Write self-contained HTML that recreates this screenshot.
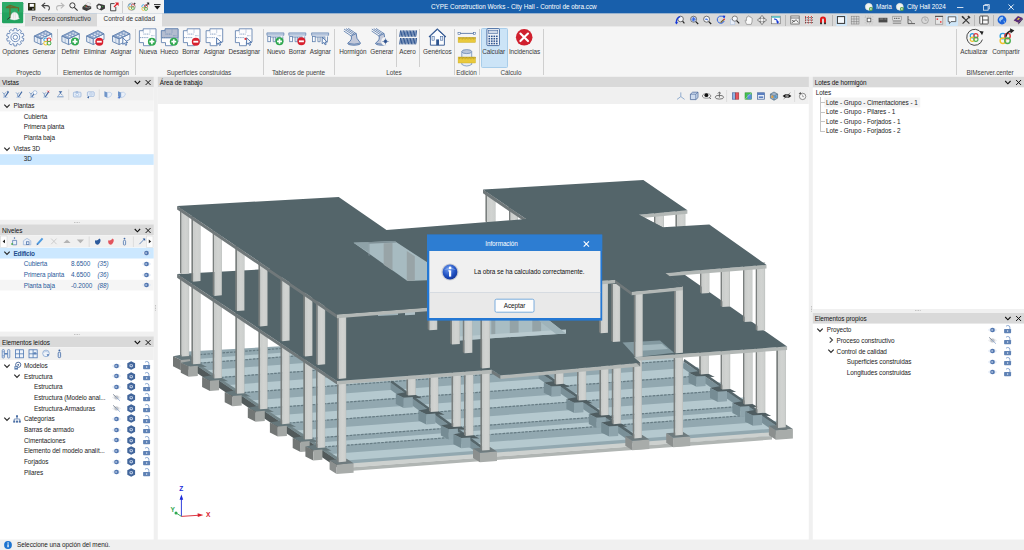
<!DOCTYPE html>
<html><head><meta charset="utf-8"><title>CYPE Construction Works - City Hall - Control de obra.ccw</title>
<style>
html,body{margin:0;padding:0;background:#f0f0f0;}
body{width:1024px;height:550px;overflow:hidden;}
#app{position:relative;width:1024px;height:550px;overflow:hidden;background:#f0f0f0;font-family:"Liberation Sans",sans-serif;font-size:6.4px;color:#222;line-height:8px;letter-spacing:-0.07px;}
#app *{box-sizing:border-box;}
.a{position:absolute;white-space:nowrap;}
.t{position:absolute;white-space:nowrap;height:8px;line-height:8px;}
.c{text-align:center;}
.hdr{position:absolute;background:#d9d9d9;height:10.7px;}
.hdr .t{top:2.0px;color:#111;}
.sep{position:absolute;width:1px;background:#cfcfcf;}
svg{position:absolute;overflow:visible;}
</style></head><body>
<div id="app">
<svg style="left:0px;top:0px" width="1024" height="14" viewBox="0 0 1024 14"><rect x="0.00" y="0.00" width="1024.00" height="13.60" fill="#185fab"/></svg>
<svg style="left:0px;top:0px" width="164" height="14" viewBox="0 0 164 14"><rect x="0.00" y="0.00" width="164.00" height="13.60" fill="#f3f3f3"/></svg>
<svg style="left:0px;top:13px" width="1024" height="14" viewBox="0 0 1024 14"><rect x="0.00" y="0.60" width="1024.00" height="13.00" fill="#d9d9d9"/></svg>
<svg style="left:0px;top:13px" width="25" height="14" viewBox="0 0 25 14"><rect x="0.00" y="0.60" width="25.00" height="13.00" fill="#f3f3f3"/></svg>
<svg style="left:1.60px;top:2.20px" width="21.2" height="21.2" viewBox="0 0 21.2 21.2"><rect x="0" y="0" width="21.2" height="21.2" rx="1.2" fill="#22a35f"/><rect x="0" y="0" width="21.2" height="10.5" rx="1.2" fill="#2cab69"/><path d="M8 3.2 V16 M3.8 5.6 H16.5 M16.5 5.6 V9.5 M8 3.4 L4 5.6 M8 3.4 L15 5.6" stroke="#6a6a2c" stroke-width="1.2" fill="none"/><path d="M5.2 17.5 L8 15.2" stroke="#333" stroke-width="1"/><path d="M8.8 16 Q8.6 10.4 12.6 10.2 Q16.4 10.4 16.6 15.4 L17.4 16.6 Q12.5 19.4 8 17Z" fill="#f4f4f4" stroke="#d8d8d8" stroke-width="0.4"/><path d="M11.4 11 V16.5 M13.3 11 V16.5" stroke="#cfcfcf" stroke-width="0.5"/></svg>
<svg style="left:27.80px;top:3.10px" width="7.4" height="7.6" viewBox="0 0 7.4 7.6"><rect x="0" y="0" width="7.4" height="7.6" rx="0.5" fill="#1a1a10"/><rect x="1.5" y="0.8" width="4.4" height="3" fill="#fff"/><rect x="0.6" y="0.6" width="0.8" height="6" fill="#55551e"/><rect x="6" y="0.6" width="0.8" height="6" fill="#55551e"/><rect x="4.2" y="5.5" width="1.6" height="1.2" fill="#ddd"/></svg>
<svg style="left:41.00px;top:1.60px" width="10" height="9" viewBox="0 0 10 9"><path d="M4.2 0.8 L1 3.6 L4.2 6.4 M1.2 3.6 H6 Q8.6 3.8 8.4 6.4 Q8.2 7.6 7.4 8.4" stroke="#444" stroke-width="1.1" fill="none"/></svg>
<svg style="left:54.50px;top:1.60px" width="10" height="9" viewBox="0 0 10 9"><path d="M5.8 0.8 L9 3.6 L5.8 6.4 M8.8 3.6 H4 Q1.4 3.8 1.6 6.4 Q1.8 7.6 2.6 8.4" stroke="#b9b9b9" stroke-width="1.1" fill="none"/></svg>
<svg style="left:68.50px;top:2.30px" width="9.5" height="9.5" viewBox="0 0 9.5 9.5"><circle cx="3.4" cy="3.4" r="2.6" fill="none" stroke="#3a3a3a" stroke-width="1"/><path d="M5.3 5.3 L8.6 8.6" stroke="#3a3a3a" stroke-width="1.2"/></svg>
<svg style="left:82.00px;top:2.00px" width="9.6" height="9.4" viewBox="0 0 9.6 9.4"><path d="M0.4 5 L3.2 2.6 L9.2 4.4 L9.2 6.8 L4.6 9 L0.4 7.2Z" fill="#3d3d3d"/><path d="M3.6 2.4 L5.8 0.4 L8.6 1.4 L7.4 4.2Z" fill="#f2f2f2" stroke="#888" stroke-width="0.3"/><path d="M2.2 4.6 L6.4 6 L8.6 4.8" stroke="#bbb" stroke-width="0.5" fill="none"/><circle cx="4.2" cy="4.2" r="0.6" fill="#e33"/><circle cx="3" cy="3.9" r="0.5" fill="#3c3"/></svg>
<svg style="left:96.00px;top:3.00px" width="9.4" height="8" viewBox="0 0 9.4 8"><path d="M0.3 2.6 L2.6 0.6 L8.9 2.2 L9 5.6 L5.4 7.6 L0.8 5.6Z" fill="#3d3d3d"/><path d="M1.6 3 Q3.4 1.6 5 3.2 Q5.4 5.6 3.2 6.2 Q1.4 5.4 1.6 3Z" fill="#f6f6f6"/><circle cx="6.6" cy="3.6" r="0.5" fill="#3c3"/></svg>
<svg style="left:109.60px;top:2.00px" width="9" height="9.4" viewBox="0 0 9 9.4"><path d="M4.6 1.6 H0.6 V8.8 H5.8 V5" stroke="#3a3a3a" stroke-width="0.9" fill="#f4f4f4"/><path d="M4 5 L7.6 1.4" stroke="#e0202a" stroke-width="1.3"/><path d="M5 0.4 H8.6 V4Z" fill="#e0202a"/></svg>
<div class="sep" style="left:122.2px;top:1px;height:11.5px;background:#d0d0d0;"></div>
<svg style="left:127.00px;top:2.30px" width="10" height="9.4" viewBox="0 0 10 9.4"><circle cx="4.6" cy="4.7" r="3.7" fill="#fafafa" stroke="#777" stroke-width="0.6"/><circle cx="3.3819999999999997" cy="3.582" r="1.45" fill="none" stroke="#2d9fe0" stroke-width="0.754"/><circle cx="5.818" cy="3.582" r="1.45" fill="none" stroke="#e23b3b" stroke-width="0.754"/><circle cx="3.3819999999999997" cy="6.018" r="1.45" fill="none" stroke="#f0c22a" stroke-width="0.754"/><circle cx="5.818" cy="6.018" r="1.45" fill="none" stroke="#4cae4f" stroke-width="0.754"/><path d="M7 0.6 L8.8 1.6 L7.2 2.8Z" fill="#333"/></svg>
<svg style="left:139.50px;top:2.00px" width="10" height="10" viewBox="0 0 10 10"><circle cx="3.398" cy="4.298" r="1.55" fill="none" stroke="#2d9fe0" stroke-width="0.806"/><circle cx="6.002000000000001" cy="4.298" r="1.55" fill="none" stroke="#e23b3b" stroke-width="0.806"/><circle cx="3.398" cy="6.901999999999999" r="1.55" fill="none" stroke="#f0c22a" stroke-width="0.806"/><circle cx="6.002000000000001" cy="6.901999999999999" r="1.55" fill="none" stroke="#4cae4f" stroke-width="0.806"/><path d="M5.4 4.2 L8 1.6" stroke="#222" stroke-width="1"/><path d="M6.6 0.6 H9.2 V3.2Z" fill="#222"/></svg>
<svg style="left:154.30px;top:3.80px" width="7" height="6" viewBox="0 0 7 6"><rect x="0" y="0.2" width="6.6" height="0.9" fill="#111"/><path d="M0.3 2 H6.3 L3.3 5.4Z" fill="#111"/></svg>
<svg style="left:97px;top:13px" width="65" height="14" viewBox="0 0 65 14"><rect x="0.00" y="0.60" width="65.00" height="13.20" fill="#f5f5f5"/></svg>
<div class="t" style="left:31.6px;top:15px;color:#333;letter-spacing:-0.01px;">Proceso constructivo</div>
<div class="t" style="left:103.6px;top:15px;color:#333;letter-spacing:-0.01px;">Control de calidad</div>
<div class="t" style="left:431.0px;top:3px;color:#fff;letter-spacing:-0.02px;">CYPE Construction Works - City Hall - Control de obra.ccw</div>
<div class="t" style="left:876.0px;top:3px;color:#fff;">Maria</div>
<div class="t" style="left:907.0px;top:3px;color:#fff;">City Hall 2024</div>
<svg style="left:865.00px;top:3.00px" width="8.5" height="8.5" viewBox="0 0 8.5 8.5"><circle cx="3.8" cy="3.8" r="3.5" fill="#f2f5f2" stroke="#cfd6cf" stroke-width="0.4"/><path d="M3.8 0.4 L6.8 2.2 L6.8 5.4 L3.8 7.2 L0.8 5.4 L0.8 2.2Z" fill="none" stroke="#e4e8e4" stroke-width="0.4"/><circle cx="5.9" cy="5.9" r="2" fill="#58a646"/><circle cx="5.9" cy="5.9" r="0.9" fill="#d8e9c9"/></svg>
<svg style="left:895.80px;top:3.20px" width="8.5" height="8.5" viewBox="0 0 8.5 8.5"><circle cx="3.8" cy="3.8" r="3.5" fill="#f2f5f2" stroke="#cfd6cf" stroke-width="0.4"/><path d="M3.8 0.4 L6.8 2.2 L6.8 5.4 L3.8 7.2 L0.8 5.4 L0.8 2.2Z" fill="none" stroke="#e4e8e4" stroke-width="0.4"/><circle cx="5.9" cy="5.9" r="2" fill="#58a646"/><circle cx="5.9" cy="5.9" r="0.9" fill="#d8e9c9"/></svg>
<svg style="left:956.80px;top:6.60px" width="6.4" height="1" viewBox="0 0 6.4 1"><rect x="0" y="0" width="6.4" height="0.9" fill="#e8eef7"/></svg>
<svg style="left:982.50px;top:4.00px" width="7" height="7" viewBox="0 0 7 7"><rect x="0.5" y="1.6" width="4.6" height="4.6" fill="none" stroke="#e8eef7" stroke-width="0.8"/><path d="M1.8 1.4 V0.5 H6.3 V5 H5.3" fill="none" stroke="#e8eef7" stroke-width="0.8"/></svg>
<svg style="left:1008.00px;top:4.00px" width="6.4" height="6.4" viewBox="0 0 6.4 6.4"><path d="M0.5 0.5 L5.7 5.7 M5.7 0.5 L0.5 5.7" stroke="#fff" stroke-width="0.9" fill="none"/></svg>
<svg style="left:674.50px;top:14.90px" width="10" height="10" viewBox="0 0 10 10"><circle cx="5.6" cy="4" r="2.8" fill="#f4f6fa" stroke="#555" stroke-width="0.8"/><path d="M7.6 6.2 L9.4 8.4" stroke="#222" stroke-width="1.1"/><path d="M1.4 8.6 Q0.8 3 5.2 1.6" stroke="#1638d8" stroke-width="1.4" fill="none"/><path d="M0.2 7 L1.6 9.6 L3 7Z" fill="#1638d8"/></svg>
<svg style="left:688.50px;top:14.90px" width="10" height="10" viewBox="0 0 10 10"><circle cx="4.6" cy="4.2" r="3" fill="#f4f6fa" stroke="#555" stroke-width="0.8"/><path d="M6.8 6.6 L9.2 9" stroke="#222" stroke-width="1.2"/><path d="M4.6 1.8 V6.6 M2.2 4.2 H7 M2.9 2.5 L6.3 5.9 M6.3 2.5 L2.9 5.9" stroke="#2f62e0" stroke-width="0.9"/></svg>
<svg style="left:702.20px;top:14.90px" width="10" height="10" viewBox="0 0 10 10"><circle cx="4.6" cy="4.2" r="3" fill="#f4f6fa" stroke="#555" stroke-width="0.8"/><path d="M6.8 6.6 L9.2 9" stroke="#222" stroke-width="1.2"/><path d="M3 4.4 H6 M4 3.2 L5.4 5.4" stroke="#2f62e0" stroke-width="0.7"/></svg>
<svg style="left:715.80px;top:14.90px" width="10" height="10" viewBox="0 0 10 10"><path d="M7.8 2.6 A3.6 3.6 0 1 0 8.2 6" stroke="#2f62e0" stroke-width="1" fill="none"/><path d="M6.4 0.4 L9.4 0.8 L8.4 3.6Z" fill="#1638d8"/><path d="M4.6 7.6 L8 4.4" stroke="#6a5a28" stroke-width="1.3"/><circle cx="8.2" cy="4.4" r="0.8" fill="#e33"/></svg>
<svg style="left:729.50px;top:14.90px" width="10" height="10" viewBox="0 0 10 10"><rect x="0.4" y="4.6" width="4.4" height="5" fill="#e8eef8" stroke="#a9bddb" stroke-width="0.5"/><circle cx="4.8" cy="3.6" r="2.6" fill="#f4f6fa" stroke="#666" stroke-width="0.8"/><path d="M6.6 5.6 L9.2 8.4" stroke="#222" stroke-width="1.2"/></svg>
<svg style="left:743.70px;top:14.90px" width="10" height="10" viewBox="0 0 10 10"><path d="M2.6 9.4 L1 5.6 Q1.4 4.8 2.4 5.8 L2.6 2.2 Q3.2 1.4 3.8 2.2 L4 1.2 Q4.7 0.5 5.3 1.2 L5.5 1.8 Q6.2 1.2 6.8 2 L7 3 Q7.8 2.6 8.2 3.4 L8 7 L7.2 9.4Z" fill="#fafafa" stroke="#777" stroke-width="0.6"/></svg>
<svg style="left:757.40px;top:14.90px" width="10" height="10" viewBox="0 0 10 10"><path d="M5 0.4 L6.8 2.6 H6 V4 H7.4 V3.2 L9.6 5 L7.4 6.8 V6 H6 V7.4 H6.8 L5 9.6 L3.2 7.4 H4 V6 H2.6 V6.8 L0.4 5 L2.6 3.2 V4 H4 V2.6 H3.2Z" fill="#f4f4f4" stroke="#555" stroke-width="0.7"/></svg>
<svg style="left:771.40px;top:14.90px" width="10" height="10" viewBox="0 0 10 10"><rect x="0.6" y="1.2" width="8.6" height="7.6" fill="#f8f8f8" stroke="#666" stroke-width="0.6"/><rect x="0.6" y="1.2" width="8.6" height="1.6" fill="#55bfc8"/><path d="M3 4 Q6.4 4 6.6 7.4" stroke="#1638d8" stroke-width="1.2" fill="none"/><path d="M5 6.6 L6.8 9 L8.2 6.4Z" fill="#1638d8"/></svg>
<div class="sep" style="left:785px;top:15px;height:10.5px;background:#b8b8b8;"></div>
<svg style="left:790.00px;top:14.90px" width="10" height="10" viewBox="0 0 10 10"><rect x="0.8" y="1" width="8.4" height="8" fill="#f4f4f4" stroke="#555" stroke-width="0.7"/><path d="M1 3 H9 M2 5 L4 7 L6 4.6 L8.4 7.6 M2 8 L4.4 5" stroke="#444" stroke-width="0.7" fill="none"/></svg>
<svg style="left:803.50px;top:14.90px" width="10" height="10" viewBox="0 0 10 10"><rect x="1" y="0.8" width="8" height="8.4" fill="#e8e8e8"/><path d="M1.6 1 V9 M4.4 1 V9 M7.4 1 V9" stroke="#d33" stroke-width="1" stroke-dasharray="1.2 0.9"/><path d="M1 2.6 H9 M1 5 H9 M1 7.6 H9" stroke="#333" stroke-width="0.8" stroke-dasharray="1.4 0.8"/></svg>
<svg style="left:817.50px;top:14.90px" width="10" height="10" viewBox="0 0 10 10"><path d="M2 9 V4.6 Q2 1.4 5 1.4 Q8 1.4 8 4.6 V9 H6 V4.8 Q6 3.4 5 3.4 Q4 3.4 4 4.8 V9Z" fill="#e01818"/><rect x="2" y="7.6" width="2" height="1.6" fill="#333"/><rect x="6" y="7.6" width="2" height="1.6" fill="#333"/></svg>
<div class="sep" style="left:832px;top:15px;height:10.5px;background:#b8b8b8;"></div>
<div class="a" style="left:835.5px;top:14.6px;width:11.6px;height:11px;background:#cfe6f8;border-radius:1px;"></div>
<svg style="left:836.30px;top:14.90px" width="10" height="10" viewBox="0 0 10 10"><rect x="1.4" y="1.6" width="7.2" height="6.8" fill="#f4f8fc" stroke="#333" stroke-width="1"/></svg>
<svg style="left:849.80px;top:14.90px" width="10" height="10" viewBox="0 0 10 10"><path d="M1 1.4 H9 M1 4 H9 M1 6.6 H9 M1 9 H9 M1.4 1 V9.2 M4 1 V9.2 M6.6 1 V9.2 M9 1 V9.2" stroke="#777" stroke-width="0.5"/></svg>
<svg style="left:863.80px;top:14.90px" width="10" height="10" viewBox="0 0 10 10"><rect x="3.2" y="3.2" width="3.6" height="3.6" fill="#fff" stroke="#555" stroke-width="0.8"/><path d="M1.2 1.2 H8.8 V8.8 H1.2Z" fill="none" stroke="#aaa" stroke-width="0.6" stroke-dasharray="0.8 1.8"/></svg>
<svg style="left:878.00px;top:14.90px" width="10" height="10" viewBox="0 0 10 10"><rect x="0.6" y="2.8" width="8.8" height="4.6" fill="#4a4a4a"/><path d="M1.6 4 H5.4 M6.4 4 H8.4" stroke="#bbb" stroke-width="0.6"/></svg>
<svg style="left:892.30px;top:14.90px" width="10" height="10" viewBox="0 0 10 10"><rect x="0.8" y="1.2" width="8.4" height="4.2" fill="#e0e0e0" stroke="#777" stroke-width="0.5"/><path d="M2 3.3 H8" stroke="#555" stroke-width="1" stroke-dasharray="1.2 0.6"/><path d="M0.8 6.8 H9.2 M0.8 8.4 H9.2" stroke="#777" stroke-width="0.7"/></svg>
<svg style="left:905.80px;top:14.90px" width="10" height="10" viewBox="0 0 10 10"><path d="M2 1 V8.6 H9" stroke="#555" stroke-width="0.9" fill="none"/><path d="M2 4.4 Q5.6 4.8 6.2 8.6" stroke="#555" stroke-width="0.6" fill="none"/></svg>
<svg style="left:919.80px;top:14.90px" width="10" height="10" viewBox="0 0 10 10"><circle cx="5" cy="5.2" r="3.4" fill="none" stroke="#888" stroke-width="0.6"/><path d="M5 5.2 V2.6 M5 5.2 H7" stroke="#888" stroke-width="0.5"/></svg>
<svg style="left:933.50px;top:14.90px" width="10" height="10" viewBox="0 0 10 10"><rect x="1.4" y="1.6" width="7.4" height="7.6" fill="#e6e6e6" stroke="#888" stroke-width="0.6"/><rect x="1" y="0.8" width="8" height="1.2" fill="#555"/><rect x="2.6" y="3.4" width="1.5" height="1.5" fill="#e33"/><rect x="6" y="6.2" width="1.5" height="1.5" fill="#e33"/></svg>
<div class="a" style="left:946.4px;top:14.6px;width:11.6px;height:11px;background:#cfe6f8;border-radius:1px;"></div>
<svg style="left:947.30px;top:14.90px" width="10" height="10" viewBox="0 0 10 10"><path d="M1.2 1.8 H8.8 V6.6 H4 L2.4 8.6 V6.6 H1.2Z" fill="#f4f8fc" stroke="#444" stroke-width="0.8"/></svg>
<svg style="left:961.30px;top:14.90px" width="10" height="10" viewBox="0 0 10 10"><path d="M1.6 1.8 L8.4 8.6 M8.4 1.8 L1.6 8.6" stroke="#333" stroke-width="1.1"/><path d="M1 1.2 L3 3.2 M7 1 L9 3" stroke="#333" stroke-width="1.6"/></svg>
<div class="sep" style="left:974px;top:15px;height:10.5px;background:#b8b8b8;"></div>
<svg style="left:978.50px;top:14.90px" width="10" height="10" viewBox="0 0 10 10"><rect x="0.8" y="1" width="8.4" height="8" rx="0.6" fill="#fafafa" stroke="#444" stroke-width="0.9"/><path d="M3.6 1 V9 M3.6 5 H9.2" stroke="#444" stroke-width="0.9"/></svg>
<div class="sep" style="left:992.6px;top:15px;height:10.5px;background:#b8b8b8;"></div>
<svg style="left:997.30px;top:14.90px" width="10" height="10" viewBox="0 0 10 10"><circle cx="5" cy="5" r="4.4" fill="#1d63d8"/><path d="M2 4 Q3.4 1.4 5.8 1.8 Q7 3.4 5.4 4.6 Q3.6 5 3.4 7 Q2 6 2 4Z" fill="#9cc8f4"/><path d="M6.4 5.6 Q8.4 5.4 8 7.4 Q6.8 8.4 6.4 5.6Z" fill="#7fb4ee"/></svg>
<svg style="left:1013.00px;top:14.90px" width="10" height="10" viewBox="0 0 10 10"><path d="M0.6 5.6 L5 1 L9.6 3 L5.4 8Z" fill="#5a2c78"/><path d="M0.6 5.6 L5.4 8 L5.4 9.4 L0.6 7Z" fill="#d8d0c0"/><path d="M5.4 8 L9.6 3 V4.4 L5.4 9.4Z" fill="#3a1c50"/><path d="M3.8 4.4 L5.6 2.8 L7 3.4 L5.2 5Z" fill="#e8c83a"/></svg>
<svg style="left:0px;top:26px" width="1024" height="51" viewBox="0 0 1024 51"><rect x="0.00" y="0.60" width="1024.00" height="50.20" fill="#f5f5f5"/></svg>
<div class="a" style="left:481px;top:27.5px;width:26.5px;height:40.5px;background:#cce4f7;border:0.5px solid #a8cdea;border-radius:1.5px;"></div>
<div class="sep" style="left:57.0px;top:29px;height:46px;"></div>
<div class="sep" style="left:134.5px;top:29px;height:46px;"></div>
<div class="sep" style="left:262.5px;top:29px;height:46px;"></div>
<div class="sep" style="left:333.5px;top:29px;height:46px;"></div>
<div class="sep" style="left:395.5px;top:29px;height:38px;"></div>
<div class="sep" style="left:419.0px;top:29px;height:38px;"></div>
<div class="sep" style="left:453.5px;top:29px;height:46px;"></div>
<div class="sep" style="left:478.5px;top:29px;height:46px;"></div>
<div class="sep" style="left:542.5px;top:29px;height:46px;"></div>
<div class="sep" style="left:956.0px;top:29px;height:46px;"></div>
<div class="t c" style="left:-44.5px;width:120px;top:48px;color:#3a3a3a;">Opciones</div>
<div class="t c" style="left:-16.0px;width:120px;top:48px;color:#3a3a3a;">Generar</div>
<div class="t c" style="left:10.5px;width:120px;top:48px;color:#3a3a3a;">Definir</div>
<div class="t c" style="left:35.0px;width:120px;top:48px;color:#3a3a3a;">Eliminar</div>
<div class="t c" style="left:61.0px;width:120px;top:48px;color:#3a3a3a;">Asignar</div>
<div class="t c" style="left:88.0px;width:120px;top:48px;color:#3a3a3a;">Nueva</div>
<div class="t c" style="left:109.3px;width:120px;top:48px;color:#3a3a3a;">Hueco</div>
<div class="t c" style="left:130.8px;width:120px;top:48px;color:#3a3a3a;">Borrar</div>
<div class="t c" style="left:154.3px;width:120px;top:48px;color:#3a3a3a;">Asignar</div>
<div class="t c" style="left:184.3px;width:120px;top:48px;color:#3a3a3a;">Desasignar</div>
<div class="t c" style="left:216.0px;width:120px;top:48px;color:#3a3a3a;">Nuevo</div>
<div class="t c" style="left:237.5px;width:120px;top:48px;color:#3a3a3a;">Borrar</div>
<div class="t c" style="left:260.3px;width:120px;top:48px;color:#3a3a3a;">Asignar</div>
<div class="t c" style="left:292.8px;width:120px;top:48px;color:#3a3a3a;">Hormigón</div>
<div class="t c" style="left:321.8px;width:120px;top:48px;color:#3a3a3a;">Generar</div>
<div class="t c" style="left:347.5px;width:120px;top:48px;color:#3a3a3a;">Acero</div>
<div class="t c" style="left:377.3px;width:120px;top:48px;color:#3a3a3a;">Genéricos</div>
<div class="t c" style="left:433.7px;width:120px;top:48px;color:#3a3a3a;">Calcular</div>
<div class="t c" style="left:464.5px;width:120px;top:48px;color:#3a3a3a;">Incidencias</div>
<div class="t c" style="left:914.0px;width:120px;top:48px;color:#3a3a3a;">Actualizar</div>
<div class="t c" style="left:946.0px;width:120px;top:48px;color:#3a3a3a;">Compartir</div>
<div class="t c" style="left:-31.5px;width:120px;top:69px;color:#444;">Proyecto</div>
<div class="t c" style="left:36.0px;width:120px;top:69px;color:#444;">Elementos de hormigón</div>
<div class="t c" style="left:139.0px;width:120px;top:69px;color:#444;">Superficies construidas</div>
<div class="t c" style="left:238.5px;width:120px;top:69px;color:#444;">Tableros de puente</div>
<div class="t c" style="left:334.0px;width:120px;top:69px;color:#444;">Lotes</div>
<div class="t c" style="left:406.5px;width:120px;top:69px;color:#444;">Edición</div>
<div class="t c" style="left:451.0px;width:120px;top:69px;color:#444;">Cálculo</div>
<div class="t c" style="left:930.0px;width:120px;top:69px;color:#444;">BIMserver.center</div>
<svg style="left:0;top:0" width="1024" height="80" viewBox="0 0 1024 80"><path d="M13.98 28.55 L16.62 28.55 L16.84 30.65 L17.93 31.00 L19.35 29.44 L21.48 30.98 L20.43 32.82 L21.10 33.74 L23.17 33.31 L23.98 35.81 L22.05 36.68 L22.05 37.82 L23.98 38.69 L23.17 41.19 L21.10 40.76 L20.43 41.68 L21.48 43.52 L19.35 45.06 L17.93 43.50 L16.84 43.85 L16.62 45.95 L13.98 45.95 L13.76 43.85 L12.67 43.50 L11.25 45.06 L9.12 43.52 L10.17 41.68 L9.50 40.76 L7.43 41.19 L6.62 38.69 L8.55 37.82 L8.55 36.68 L6.62 35.81 L7.43 33.31 L9.50 33.74 L10.17 32.82 L9.12 30.98 L11.25 29.44 L12.67 31.00 L13.76 30.65Z" fill="#f4f7fb" stroke="#6686b6" stroke-width="0.9" stroke-linejoin="round"/><circle cx="15.3" cy="37.25" r="4.4" fill="#fbfcfe" stroke="#6686b6" stroke-width="0.9"/><circle cx="15.3" cy="37.25" r="2.2" fill="#fff" stroke="#6686b6" stroke-width="0.9"/><path d="M34.30 36.00 L41.00 38.80 L41.00 44.60 L34.30 41.60Z" fill="#e3eaf4" stroke="#5f80ae" stroke-width="0.85" stroke-linejoin="round"/><path d="M41.00 38.80 L51.70 33.80 L51.70 39.40 L41.00 44.60Z" fill="#f6f8fb" stroke="#5f80ae" stroke-width="0.85" stroke-linejoin="round"/><path d="M34.30 36.00 L45.60 30.50 L51.70 33.80 L41.00 38.80Z" fill="#8ea6cb" stroke="#5f80ae" stroke-width="0.85" stroke-linejoin="round"/><ellipse cx="39.6" cy="35.6" rx="1.05" ry="0.6" fill="#eef2f8"/><ellipse cx="42.6" cy="34.2" rx="1.05" ry="0.6" fill="#eef2f8"/><ellipse cx="45.6" cy="32.8" rx="1.05" ry="0.6" fill="#eef2f8"/><ellipse cx="42" cy="36.7" rx="1.05" ry="0.6" fill="#eef2f8"/><ellipse cx="45" cy="35.3" rx="1.05" ry="0.6" fill="#eef2f8"/><ellipse cx="48" cy="33.9" rx="1.05" ry="0.6" fill="#eef2f8"/><path d="M37.6 37.6 V43" stroke="#5f80ae" stroke-width="0.5" opacity="0.8"/><rect x="43.4" y="37.4" width="8.6" height="8.2" fill="#fbfbfb"/><circle cx="45.762" cy="39.862" r="1.95" fill="none" stroke="#2d9fe0" stroke-width="1.014"/><circle cx="49.038" cy="39.862" r="1.95" fill="none" stroke="#e23b3b" stroke-width="1.014"/><circle cx="45.762" cy="43.138" r="1.95" fill="none" stroke="#f0c22a" stroke-width="1.014"/><circle cx="49.038" cy="43.138" r="1.95" fill="none" stroke="#4cae4f" stroke-width="1.014"/><path d="M61.90 36.00 L68.60 38.80 L68.60 44.60 L61.90 41.60Z" fill="#e3eaf4" stroke="#5f80ae" stroke-width="0.85" stroke-linejoin="round"/><path d="M68.60 38.80 L79.30 33.80 L79.30 39.40 L68.60 44.60Z" fill="#f6f8fb" stroke="#5f80ae" stroke-width="0.85" stroke-linejoin="round"/><path d="M61.90 36.00 L73.20 30.50 L79.30 33.80 L68.60 38.80Z" fill="#8ea6cb" stroke="#5f80ae" stroke-width="0.85" stroke-linejoin="round"/><ellipse cx="67.2" cy="35.6" rx="1.05" ry="0.6" fill="#eef2f8"/><ellipse cx="70.2" cy="34.2" rx="1.05" ry="0.6" fill="#eef2f8"/><ellipse cx="73.2" cy="32.8" rx="1.05" ry="0.6" fill="#eef2f8"/><ellipse cx="69.6" cy="36.7" rx="1.05" ry="0.6" fill="#eef2f8"/><ellipse cx="72.6" cy="35.3" rx="1.05" ry="0.6" fill="#eef2f8"/><ellipse cx="75.6" cy="33.9" rx="1.05" ry="0.6" fill="#eef2f8"/><path d="M65.2 37.6 V43" stroke="#5f80ae" stroke-width="0.5" opacity="0.8"/><circle cx="75" cy="41.6" r="4.0" fill="#2fa84f"/><path d="M72.52 41.6 H77.48 M75 39.120000000000005 V44.08" stroke="#fff" stroke-width="1.68"/><path d="M86.60 36.00 L93.30 38.80 L93.30 44.60 L86.60 41.60Z" fill="#e3eaf4" stroke="#5f80ae" stroke-width="0.85" stroke-linejoin="round"/><path d="M93.30 38.80 L104.00 33.80 L104.00 39.40 L93.30 44.60Z" fill="#f6f8fb" stroke="#5f80ae" stroke-width="0.85" stroke-linejoin="round"/><path d="M86.60 36.00 L97.90 30.50 L104.00 33.80 L93.30 38.80Z" fill="#8ea6cb" stroke="#5f80ae" stroke-width="0.85" stroke-linejoin="round"/><ellipse cx="91.89999999999999" cy="35.6" rx="1.05" ry="0.6" fill="#eef2f8"/><ellipse cx="94.89999999999999" cy="34.2" rx="1.05" ry="0.6" fill="#eef2f8"/><ellipse cx="97.89999999999999" cy="32.8" rx="1.05" ry="0.6" fill="#eef2f8"/><ellipse cx="94.3" cy="36.7" rx="1.05" ry="0.6" fill="#eef2f8"/><ellipse cx="97.3" cy="35.3" rx="1.05" ry="0.6" fill="#eef2f8"/><ellipse cx="100.3" cy="33.9" rx="1.05" ry="0.6" fill="#eef2f8"/><path d="M89.89999999999999 37.6 V43" stroke="#5f80ae" stroke-width="0.5" opacity="0.8"/><circle cx="99.3" cy="41.7" r="4.0" fill="#d8202e"/><path d="M96.82 41.7 H101.78" stroke="#fff" stroke-width="1.84"/><path d="M112.50 36.00 L119.20 38.80 L119.20 44.60 L112.50 41.60Z" fill="#e3eaf4" stroke="#5f80ae" stroke-width="0.85" stroke-linejoin="round"/><path d="M119.20 38.80 L129.90 33.80 L129.90 39.40 L119.20 44.60Z" fill="#f6f8fb" stroke="#5f80ae" stroke-width="0.85" stroke-linejoin="round"/><path d="M112.50 36.00 L123.80 30.50 L129.90 33.80 L119.20 38.80Z" fill="#8ea6cb" stroke="#5f80ae" stroke-width="0.85" stroke-linejoin="round"/><ellipse cx="117.8" cy="35.6" rx="1.05" ry="0.6" fill="#eef2f8"/><ellipse cx="120.8" cy="34.2" rx="1.05" ry="0.6" fill="#eef2f8"/><ellipse cx="123.8" cy="32.8" rx="1.05" ry="0.6" fill="#eef2f8"/><ellipse cx="120.2" cy="36.7" rx="1.05" ry="0.6" fill="#eef2f8"/><ellipse cx="123.2" cy="35.3" rx="1.05" ry="0.6" fill="#eef2f8"/><ellipse cx="126.2" cy="33.9" rx="1.05" ry="0.6" fill="#eef2f8"/><path d="M115.8 37.6 V43" stroke="#5f80ae" stroke-width="0.5" opacity="0.8"/><path d="M122.80 37.80 L122.80 44.40 L124.50 43.00 L125.70 45.40 L126.80 44.90 L125.70 42.60 L127.80 42.60Z" fill="#fafbfd" stroke="#4a6fa8" stroke-width="0.9" stroke-linejoin="round"/><path d="M143.2 28.799999999999997 H156 V42.0 H150.4 V45.7 H143.5 V42.599999999999994 H139.4 V30.7 H143.2Z" fill="#fdfdfe" stroke="#5f80ae" stroke-width="0.85" stroke-linejoin="round"/><path d="M143.4 34.1 H149.6 M140 37.599999999999994 H148.2" stroke="#5f80ae" stroke-width="0.7" stroke-dasharray="1.2 0.6" fill="none"/><path d="M150 29.4 V33.0 M143.4 30.799999999999997 V33.0" stroke="#5f80ae" stroke-width="0.5" opacity="0.7" fill="none"/><path d="M151 35.699999999999996 H154.8" stroke="#5f80ae" stroke-width="0.6" stroke-dasharray="0.8 0.5"/><circle cx="151.9" cy="41.7" r="4.0" fill="#2fa84f"/><path d="M149.42000000000002 41.7 H154.38 M151.9 39.220000000000006 V44.18" stroke="#fff" stroke-width="1.68"/><path d="M165.2 28.799999999999997 H178 V42.0 H172.4 V45.7 H165.5 V42.599999999999994 H161.4 V30.7 H165.2Z" fill="#fdfdfe" stroke="#5f80ae" stroke-width="0.85" stroke-linejoin="round"/><path d="M165.2 28.799999999999997 H178 V37.9 H161.4 V30.7 H165.2Z" fill="#b3bccf" stroke="#5f80ae" stroke-width="0.7"/><path d="M165.4 34.1 H171.6 M162 37.599999999999994 H170.2" stroke="#5f80ae" stroke-width="0.7" stroke-dasharray="1.2 0.6" fill="none"/><path d="M172 29.4 V33.0 M165.4 30.799999999999997 V33.0" stroke="#5f80ae" stroke-width="0.5" opacity="0.7" fill="none"/><path d="M173 35.699999999999996 H176.8" stroke="#5f80ae" stroke-width="0.6" stroke-dasharray="0.8 0.5"/><circle cx="173.8" cy="41.7" r="4.0" fill="#2fa84f"/><path d="M171.32000000000002 41.7 H176.28 M173.8 39.220000000000006 V44.18" stroke="#fff" stroke-width="1.68"/><path d="M187.2 28.799999999999997 H200 V42.0 H194.4 V45.7 H187.5 V42.599999999999994 H183.4 V30.7 H187.2Z" fill="#fdfdfe" stroke="#5f80ae" stroke-width="0.85" stroke-linejoin="round"/><path d="M187.4 34.1 H193.6 M184 37.599999999999994 H192.2" stroke="#5f80ae" stroke-width="0.7" stroke-dasharray="1.2 0.6" fill="none"/><path d="M194 29.4 V33.0 M187.4 30.799999999999997 V33.0" stroke="#5f80ae" stroke-width="0.5" opacity="0.7" fill="none"/><path d="M195 35.699999999999996 H198.8" stroke="#5f80ae" stroke-width="0.6" stroke-dasharray="0.8 0.5"/><circle cx="195.8" cy="41.7" r="4.0" fill="#d8202e"/><path d="M193.32000000000002 41.7 H198.28" stroke="#fff" stroke-width="1.84"/><path d="M209.89999999999998 28.799999999999997 H222.7 V42.0 H217.1 V45.7 H210.2 V42.599999999999994 H206.1 V30.7 H209.89999999999998Z" fill="#fdfdfe" stroke="#5f80ae" stroke-width="0.85" stroke-linejoin="round"/><path d="M210.1 34.1 H216.29999999999998 M206.7 37.599999999999994 H214.89999999999998" stroke="#5f80ae" stroke-width="0.7" stroke-dasharray="1.2 0.6" fill="none"/><path d="M216.7 29.4 V33.0 M210.1 30.799999999999997 V33.0" stroke="#5f80ae" stroke-width="0.5" opacity="0.7" fill="none"/><path d="M217.7 35.699999999999996 H221.5" stroke="#5f80ae" stroke-width="0.6" stroke-dasharray="0.8 0.5"/><path d="M216.60 37.80 L216.60 44.40 L218.30 43.00 L219.50 45.40 L220.60 44.90 L219.50 42.60 L221.60 42.60Z" fill="#fafbfd" stroke="#4a6fa8" stroke-width="0.9" stroke-linejoin="round"/><path d="M239.2 28.799999999999997 H252 V42.0 H246.4 V45.7 H239.5 V42.599999999999994 H235.4 V30.7 H239.2Z" fill="#fdfdfe" stroke="#5f80ae" stroke-width="0.85" stroke-linejoin="round"/><path d="M239.4 34.1 H245.6 M236 37.599999999999994 H244.2" stroke="#5f80ae" stroke-width="0.7" stroke-dasharray="1.2 0.6" fill="none"/><path d="M246 29.4 V33.0 M239.4 30.799999999999997 V33.0" stroke="#5f80ae" stroke-width="0.5" opacity="0.7" fill="none"/><path d="M247 35.699999999999996 H250.8" stroke="#5f80ae" stroke-width="0.6" stroke-dasharray="0.8 0.5"/><path d="M246.60 37.80 L246.60 44.40 L248.30 43.00 L249.50 45.40 L250.60 44.90 L249.50 42.60 L251.60 42.60Z" fill="#fafbfd" stroke="#4a6fa8" stroke-width="0.9" stroke-linejoin="round"/><circle cx="245.5" cy="38.9" r="1.1" fill="#e0303a"/><path d="M266.90000000000003 32.9 H283.90000000000003 V35.300000000000004 H266.90000000000003Z" fill="#c3d0e5" stroke="#5f80ae" stroke-width="0.7" stroke-linejoin="round"/><path d="M267.6 35.5 H283.20000000000005 L282.0 36.9 H268.8Z" fill="#f1f4f9"/><rect x="267.8" y="36.5" width="2.7" height="5.2" fill="#fbfcfe" stroke="#5f80ae" stroke-width="0.8"/><path d="M270.5 37.0 H280.0 M273.20000000000005 37.0 V41.7 M275.40000000000003 37.0 V41.7 M273.20000000000005 41.7 H275.40000000000003 M278.20000000000005 37.0 V41.7 M280.20000000000005 36.5 V41.7 H282.8 V36.5" stroke="#5f80ae" stroke-width="0.8" fill="none"/><circle cx="279.5" cy="41.3" r="4.0" fill="#2fa84f"/><path d="M277.02 41.3 H281.98 M279.5 38.82 V43.779999999999994" stroke="#fff" stroke-width="1.68"/><path d="M288.8 32.9 H305.8 V35.300000000000004 H288.8Z" fill="#c3d0e5" stroke="#5f80ae" stroke-width="0.7" stroke-linejoin="round"/><path d="M289.5 35.5 H305.1 L303.9 36.9 H290.7Z" fill="#f1f4f9"/><rect x="289.7" y="36.5" width="2.7" height="5.2" fill="#fbfcfe" stroke="#5f80ae" stroke-width="0.8"/><path d="M292.4 37.0 H301.9 M295.1 37.0 V41.7 M297.3 37.0 V41.7 M295.1 41.7 H297.3 M300.1 37.0 V41.7 M302.1 36.5 V41.7 H304.7 V36.5" stroke="#5f80ae" stroke-width="0.8" fill="none"/><circle cx="301.4" cy="41.3" r="4.0" fill="#d8202e"/><path d="M298.91999999999996 41.3 H303.88" stroke="#fff" stroke-width="1.84"/><path d="M311.6 32.9 H328.6 V35.300000000000004 H311.6Z" fill="#c3d0e5" stroke="#5f80ae" stroke-width="0.7" stroke-linejoin="round"/><path d="M312.3 35.5 H327.90000000000003 L326.7 36.9 H313.5Z" fill="#f1f4f9"/><rect x="312.5" y="36.5" width="2.7" height="5.2" fill="#fbfcfe" stroke="#5f80ae" stroke-width="0.8"/><path d="M315.2 37.0 H324.7 M317.90000000000003 37.0 V41.7 M320.1 37.0 V41.7 M317.90000000000003 41.7 H320.1 M322.90000000000003 37.0 V41.7 M324.90000000000003 36.5 V41.7 H327.5 V36.5" stroke="#5f80ae" stroke-width="0.8" fill="none"/><path d="M322.20 37.20 L322.20 43.80 L323.90 42.40 L325.10 44.80 L326.20 44.30 L325.10 42.00 L327.20 42.00Z" fill="#fafbfd" stroke="#4a6fa8" stroke-width="0.9" stroke-linejoin="round"/><path d="M343.8 31.0 L351.8 36.4 M344.0 29.0 L353.6 35.4 M346.0 28.599999999999998 L355.20000000000005 34.6 M348.20000000000005 28.4 L356.20000000000005 33.6" stroke="#4f74a8" stroke-width="0.8" fill="none"/><path d="M351.20000000000005 36.0 L356.20000000000005 33.4 Q355.6 38.4 360.40000000000003 43.0 Q360.8 45.0 354.0 45.2 Q347.20000000000005 45.0 347.8 43.0 Q352.6 40.0 351.20000000000005 36.0Z" fill="#c3c9da" stroke="#4f74a8" stroke-width="0.9" stroke-linejoin="round"/><path d="M348.8 43.4 Q354.20000000000005 45.0 359.6 43.2" stroke="#4f74a8" stroke-width="0.7" fill="none"/><path d="M371.59999999999997 31.0 L379.59999999999997 36.4 M371.79999999999995 29.0 L381.4 35.4 M373.79999999999995 28.599999999999998 L383.0 34.6 M376.0 28.4 L384.0 33.6" stroke="#4f74a8" stroke-width="0.8" fill="none"/><path d="M379.0 36.0 L384.0 33.4 Q383.4 38.4 388.2 43.0 Q388.59999999999997 45.0 381.79999999999995 45.2 Q375.0 45.0 375.59999999999997 43.0 Q380.4 40.0 379.0 36.0Z" fill="#c3c9da" stroke="#4f74a8" stroke-width="0.9" stroke-linejoin="round"/><path d="M376.59999999999997 43.4 Q382.0 45.0 387.4 43.2" stroke="#4f74a8" stroke-width="0.7" fill="none"/><circle cx="385.6" cy="41.4" r="4.4" fill="#f5f5f5"/><path d="M385.50 37.40 L385.95 40.22 L387.21 39.59 L386.58 40.85 L389.40 41.30 L386.58 41.75 L387.21 43.01 L385.95 42.38 L385.50 45.20 L385.05 42.38 L383.79 43.01 L384.42 41.75 L381.60 41.30 L384.42 40.85 L383.79 39.59 L385.05 40.22Z" fill="#264c8c"/><rect x="399.8" y="31.799999999999997" width="16.8" height="3.6" fill="#b9c8df"/><path d="M400.60 30.4 l-0.9 6.4 M402.05 30.4 l-0.9 6.4 M403.50 30.4 l-0.9 6.4 M404.95 30.4 l-0.9 6.4 M406.40 30.4 l-0.9 6.4 M407.85 30.4 l-0.9 6.4 M409.30 30.4 l-0.9 6.4 M410.75 30.4 l-0.9 6.4 M412.20 30.4 l-0.9 6.4 M413.65 30.4 l-0.9 6.4 M415.10 30.4 l-0.9 6.4 M416.55 30.4 l-0.9 6.4 " stroke="#2f5590" stroke-width="1.0" fill="none"/><rect x="399.8" y="39.4" width="16.8" height="3.6" fill="#b9c8df"/><path d="M400.60 38 l-0.9 6.4 M402.05 38 l-0.9 6.4 M403.50 38 l-0.9 6.4 M404.95 38 l-0.9 6.4 M406.40 38 l-0.9 6.4 M407.85 38 l-0.9 6.4 M409.30 38 l-0.9 6.4 M410.75 38 l-0.9 6.4 M412.20 38 l-0.9 6.4 M413.65 38 l-0.9 6.4 M415.10 38 l-0.9 6.4 M416.55 38 l-0.9 6.4 " stroke="#2f5590" stroke-width="1.0" fill="none"/><path d="M429 37 L437.3 29 L445.8 37" stroke="#2f5590" stroke-width="1.1" fill="none"/><path d="M430.4 36 L437.3 29.6 L444.4 36 V45.2 H430.4Z" fill="#fbfcfe" stroke="#2f5590" stroke-width="0.9"/><rect x="432" y="36.4" width="2.2" height="3.8" fill="#dfe8f4" stroke="#2f5590" stroke-width="0.5"/><rect x="440.6" y="36.4" width="2.2" height="3.8" fill="#dfe8f4" stroke="#2f5590" stroke-width="0.5"/><rect x="436.2" y="39.4" width="2.8" height="5.8" fill="#2f5590"/><path d="M459 33.4 H474.6" stroke="#2f5590" stroke-width="0.7"/><rect x="458" y="32.3" width="2.2" height="2.2" fill="#fff" stroke="#2f5590" stroke-width="0.5"/><rect x="473.4" y="32.3" width="2.2" height="2.2" fill="#fff" stroke="#2f5590" stroke-width="0.5"/><rect x="458.1" y="37.3" width="17.4" height="5.2" fill="#e9c93c" stroke="#c9a820" stroke-width="0.4"/><path d="M459.30 37.3 v2.2" stroke="#7a6410" stroke-width="0.4"/><path d="M460.75 37.3 v1.4" stroke="#7a6410" stroke-width="0.4"/><path d="M462.20 37.3 v2.2" stroke="#7a6410" stroke-width="0.4"/><path d="M463.65 37.3 v1.4" stroke="#7a6410" stroke-width="0.4"/><path d="M465.10 37.3 v2.2" stroke="#7a6410" stroke-width="0.4"/><path d="M466.55 37.3 v1.4" stroke="#7a6410" stroke-width="0.4"/><path d="M468.00 37.3 v2.2" stroke="#7a6410" stroke-width="0.4"/><path d="M469.45 37.3 v1.4" stroke="#7a6410" stroke-width="0.4"/><path d="M470.90 37.3 v2.2" stroke="#7a6410" stroke-width="0.4"/><path d="M472.35 37.3 v1.4" stroke="#7a6410" stroke-width="0.4"/><path d="M473.80 37.3 v2.2" stroke="#7a6410" stroke-width="0.4"/><path d="M475.25 37.3 v1.4" stroke="#7a6410" stroke-width="0.4"/><path d="M461.8 51.6 V64.4 Q466.7 67.6 471.7 64.4 V51.6" fill="#e6ecf5" stroke="#5f80ae" stroke-width="0.7"/><ellipse cx="466.75" cy="51.6" rx="4.95" ry="2" fill="#b9c6dc" stroke="#5f80ae" stroke-width="0.7"/><rect x="458.1" y="57" width="17.4" height="6" fill="#e9c93c" stroke="#c9a820" stroke-width="0.4"/><path d="M459.30 57 v2.2" stroke="#7a6410" stroke-width="0.4"/><path d="M460.75 57 v1.4" stroke="#7a6410" stroke-width="0.4"/><path d="M462.20 57 v2.2" stroke="#7a6410" stroke-width="0.4"/><path d="M463.65 57 v1.4" stroke="#7a6410" stroke-width="0.4"/><path d="M465.10 57 v2.2" stroke="#7a6410" stroke-width="0.4"/><path d="M466.55 57 v1.4" stroke="#7a6410" stroke-width="0.4"/><path d="M468.00 57 v2.2" stroke="#7a6410" stroke-width="0.4"/><path d="M469.45 57 v1.4" stroke="#7a6410" stroke-width="0.4"/><path d="M470.90 57 v2.2" stroke="#7a6410" stroke-width="0.4"/><path d="M472.35 57 v1.4" stroke="#7a6410" stroke-width="0.4"/><path d="M473.80 57 v2.2" stroke="#7a6410" stroke-width="0.4"/><path d="M475.25 57 v1.4" stroke="#7a6410" stroke-width="0.4"/><rect x="486.9" y="28.6" width="12.6" height="17" rx="1" fill="#eef2f8" stroke="#2f5590" stroke-width="0.8"/><rect x="488.6" y="30.4" width="9.2" height="3.2" fill="#cfd9e8" stroke="#2f5590" stroke-width="0.5"/><rect x="488.50" y="35.60" width="1.6" height="1.5" fill="#2f5590"/><rect x="491.00" y="35.60" width="1.6" height="1.5" fill="#2f5590"/><rect x="493.50" y="35.60" width="1.6" height="1.5" fill="#2f5590"/><rect x="496.00" y="35.60" width="1.6" height="1.5" fill="#2f5590"/><rect x="488.50" y="38.00" width="1.6" height="1.5" fill="#2f5590"/><rect x="491.00" y="38.00" width="1.6" height="1.5" fill="#2f5590"/><rect x="493.50" y="38.00" width="1.6" height="1.5" fill="#2f5590"/><rect x="496.00" y="38.00" width="1.6" height="1.5" fill="#2f5590"/><rect x="488.50" y="40.40" width="1.6" height="1.5" fill="#2f5590"/><rect x="491.00" y="40.40" width="1.6" height="1.5" fill="#2f5590"/><rect x="493.50" y="40.40" width="1.6" height="1.5" fill="#2f5590"/><rect x="496.00" y="40.40" width="1.6" height="1.5" fill="#2f5590"/><rect x="488.50" y="42.80" width="1.6" height="1.5" fill="#2f5590"/><rect x="491.00" y="42.80" width="1.6" height="1.5" fill="#2f5590"/><rect x="493.50" y="42.80" width="1.6" height="1.5" fill="#2f5590"/><rect x="496.00" y="42.80" width="1.6" height="1.5" fill="#2f5590"/><circle cx="524.2" cy="37.3" r="8.3" fill="#d0202e"/><path d="M520.4 33.5 L528 41.1 M528 33.5 L520.4 41.1" stroke="#fff" stroke-width="2.1" stroke-linecap="round"/><path d="M981.6 33.2 A8 8 0 1 0 982.4 39.6" stroke="#333" stroke-width="0.9" fill="none"/><path d="M979.6 31 L983.6 31.6 L982 35.2Z" fill="#222"/><circle cx="972.336" cy="35.736" r="2.1" fill="none" stroke="#2d9fe0" stroke-width="1.092"/><circle cx="975.864" cy="35.736" r="2.1" fill="none" stroke="#e23b3b" stroke-width="1.092"/><circle cx="972.336" cy="39.264" r="2.1" fill="none" stroke="#f0c22a" stroke-width="1.092"/><circle cx="975.864" cy="39.264" r="2.1" fill="none" stroke="#4cae4f" stroke-width="1.092"/><circle cx="1002.8900000000001" cy="36.089999999999996" r="2.75" fill="none" stroke="#2d9fe0" stroke-width="1.4300000000000002"/><circle cx="1007.51" cy="36.089999999999996" r="2.75" fill="none" stroke="#e23b3b" stroke-width="1.4300000000000002"/><circle cx="1002.8900000000001" cy="40.71" r="2.75" fill="none" stroke="#f0c22a" stroke-width="1.4300000000000002"/><circle cx="1007.51" cy="40.71" r="2.75" fill="none" stroke="#4cae4f" stroke-width="1.4300000000000002"/><path d="M1006 36.6 Q1006.8 32 1011 30.8" stroke="#222" stroke-width="1.5" fill="none"/><path d="M1010 28.2 L1014.4 30.6 L1010.6 33.6Z" fill="#222"/></svg>
<svg style="left:0px;top:76px" width="154" height="12" viewBox="0 0 154 12"><rect x="0.00" y="0.80" width="153.70" height="10.70" fill="#d9d9d9"/></svg><div class="hdr" style="left:0px;top:76.8px;width:153.7px;background:none;"><div class="t" style="left:2px;">Vistas</div><svg style="left:0;top:0" width="153.7" height="10.7" viewBox="0 0 153.7 10.7"><path d="M134.8 4 L137.5 6.8 L140.2 4" stroke="#111" stroke-width="1.1" fill="none"/><path d="M145.7 3 L150.7 8 M150.7 3 L145.7 8" stroke="#111" stroke-width="1" fill="none"/></svg></div>
<svg style="left:0px;top:87px" width="154" height="133" viewBox="0 0 154 133"><rect x="0.00" y="0.50" width="153.70" height="132.30" fill="#fff"/></svg>
<svg style="left:0px;top:87px" width="154" height="14" viewBox="0 0 154 14"><rect x="0.00" y="0.50" width="153.70" height="13.30" fill="#f0f0f0"/></svg>
<svg style="left:0;top:0" width="160" height="110" viewBox="0 0 160 110"><path d="M2.6 92.39999999999999 L4.2 94.2 L5.6 92.39999999999999 M4.2 94.2 V96.8" stroke="#5f86bd" stroke-width="0.7" fill="none"/><path d="M5.0 97.0 L8.6 91.6" stroke="#3f67a3" stroke-width="1.1"/><path d="M3.0 97.39999999999999 H7.6" stroke="#8fb0dc" stroke-width="0.6"/><path d="M7.6 90.8 v2 M6.6 91.8 h2" stroke="#3f67a3" stroke-width="0.5"/><path d="M16 92.39999999999999 L17.6 94.2 L19 92.39999999999999 M17.6 94.2 V96.8" stroke="#5f86bd" stroke-width="0.7" fill="none"/><path d="M18.4 97.0 L22 91.6" stroke="#3f67a3" stroke-width="1.1"/><path d="M16.4 97.39999999999999 H21" stroke="#8fb0dc" stroke-width="0.6"/><path d="M29.4 92.39999999999999 L31.0 94.2 L32.4 92.39999999999999 M31.0 94.2 V96.8" stroke="#5f86bd" stroke-width="0.7" fill="none"/><path d="M31.799999999999997 97.0 L35.4 91.6" stroke="#3f67a3" stroke-width="1.1"/><path d="M29.799999999999997 97.39999999999999 H34.4" stroke="#8fb0dc" stroke-width="0.6"/><circle cx="35" cy="92.6" r="1.9" fill="#fff" stroke="#7fa2d2" stroke-width="0.6"/><path d="M42.8 92.39999999999999 L44.4 94.2 L45.8 92.39999999999999 M44.4 94.2 V96.8" stroke="#5f86bd" stroke-width="0.7" fill="none"/><path d="M45.199999999999996 97.0 L48.8 91.6" stroke="#3f67a3" stroke-width="1.1"/><path d="M43.199999999999996 97.39999999999999 H47.8" stroke="#8fb0dc" stroke-width="0.6"/><path d="M47.4 90.6 l1.8 1.8 m0 -1.8 l-1.8 1.8" stroke="#e0303a" stroke-width="0.7"/><path d="M57 96.8 H63.6 M58.4 95.6 L60.4 93.2 L62.6 95.39999999999999" stroke="#5f86bd" stroke-width="0.8" fill="none"/><path d="M58.6 91.2 H62.4 L60.5 93.39999999999999Z" fill="#3f67a3"/><path d="M68.7 89.5 V100" stroke="#cfcfcf" stroke-width="0.6"/><rect x="73.4" y="92.2" width="7.6" height="4.8" rx="0.8" fill="#e2ebf7" stroke="#86a6d2" stroke-width="0.6"/><circle cx="77.2" cy="94.6" r="1.3" fill="#f6f9fd" stroke="#86a6d2" stroke-width="0.5"/><rect x="75.6" y="91.39999999999999" width="2.6" height="1" fill="#86a6d2"/><rect x="87.4" y="91.8" width="6.8" height="4.6" rx="0.8" fill="#e2ebf7" stroke="#86a6d2" stroke-width="0.6"/><circle cx="91" cy="94.0" r="1.2" fill="#f6f9fd" stroke="#86a6d2" stroke-width="0.5"/><path d="M87 97.39999999999999 l2 -1.4 v2.4Z" fill="#3f67a3"/><path d="M99.3 89.5 V100" stroke="#cfcfcf" stroke-width="0.6"/><path d="M104.4 91.2 L107.4 92.39999999999999 V97.8 L104.4 96.39999999999999Z" fill="#6f94c8"/><path d="M107.4 92.39999999999999 Q110.4 91.39999999999999 112.0 93.8 Q111.4 97.2 107.4 97.8Z" fill="#eaf0f9" stroke="#9db8de" stroke-width="0.5"/><path d="M118 91.2 L121 92.39999999999999 V97.8 L118 96.39999999999999Z" fill="#6f94c8"/><path d="M121 92.39999999999999 Q124 91.39999999999999 125.6 93.8 Q125 97.2 121 97.8Z" fill="#eaf0f9" stroke="#9db8de" stroke-width="0.5"/><path d="M117.4 98.0 l2.4 -1.6 v2.2Z" fill="#2f62c8"/></svg>
<svg style="left:0px;top:100px" width="154" height="12" viewBox="0 0 154 12"><rect x="0.00" y="0.80" width="153.70" height="10.60" fill="#f5f5f5"/></svg>
<svg style="left:4.00px;top:103.20px" width="6" height="6" viewBox="0 0 6 6"><path d="M0.3 1.6 L3 4.4 L5.7 1.6" stroke="#2a2a2a" stroke-width="1.2" fill="none"/></svg>
<div class="t" style="left:13.5px;top:102px;">Plantas</div>
<div class="t" style="left:23.7px;top:113px;">Cubierta</div>
<div class="t" style="left:23.7px;top:123px;">Primera planta</div>
<div class="t" style="left:23.7px;top:134px;">Planta baja</div>
<svg style="left:4.00px;top:145.80px" width="6" height="6" viewBox="0 0 6 6"><path d="M0.3 1.6 L3 4.4 L5.7 1.6" stroke="#2a2a2a" stroke-width="1.2" fill="none"/></svg>
<div class="t" style="left:13.5px;top:145px;">Vistas 3D</div>
<svg style="left:0px;top:154px" width="154" height="11" viewBox="0 0 154 11"><rect x="0.00" y="0.20" width="153.70" height="10.70" fill="#cce8ff"/></svg>
<div class="t" style="left:23.7px;top:155px;">3D</div>
<svg style="left:74.00px;top:221.90px" width="7" height="1" viewBox="0 0 7 1"><rect x="0.0" y="0" width="0.8" height="0.8" fill="#aaa"/><rect x="1.6" y="0" width="0.8" height="0.8" fill="#aaa"/><rect x="3.2" y="0" width="0.8" height="0.8" fill="#aaa"/><rect x="4.800000000000001" y="0" width="0.8" height="0.8" fill="#aaa"/></svg>
<svg style="left:0px;top:224px" width="154" height="12" viewBox="0 0 154 12"><rect x="0.00" y="0.50" width="153.70" height="10.70" fill="#d9d9d9"/></svg><div class="hdr" style="left:0px;top:224.5px;width:153.7px;background:none;"><div class="t" style="left:2px;">Niveles</div><svg style="left:0;top:0" width="153.7" height="10.7" viewBox="0 0 153.7 10.7"><path d="M134.8 4 L137.5 6.8 L140.2 4" stroke="#111" stroke-width="1.1" fill="none"/><path d="M145.7 3 L150.7 8 M150.7 3 L145.7 8" stroke="#111" stroke-width="1" fill="none"/></svg></div>
<svg style="left:0px;top:235px" width="154" height="97" viewBox="0 0 154 97"><rect x="0.00" y="0.20" width="153.70" height="96.40" fill="#fff"/></svg>
<svg style="left:0px;top:235px" width="154" height="13" viewBox="0 0 154 13"><rect x="0.00" y="0.20" width="153.70" height="12.20" fill="#f0f0f0"/></svg>
<svg style="left:0;top:0" width="160" height="260" viewBox="0 0 160 260"><rect x="0.6" y="236" width="6.4" height="11.4" fill="#fdfdfd" stroke="#d4d4d4" stroke-width="0.5"/><path d="M5 239.6 L2.6 241.4 L5 243.20000000000002Z" fill="#222"/><rect x="146.6" y="236" width="6.4" height="11.4" fill="#fdfdfd" stroke="#d4d4d4" stroke-width="0.5"/><path d="M148.8 239.6 L151.2 241.4 L148.8 243.20000000000002Z" fill="#222"/><path d="M12.6 240.4 H16.6 V244.8 H12.6Z M13.8 238.0 h1.4 M14.5 237.4 v1.4" stroke="#4a74b0" stroke-width="0.7" fill="#eaf0f9"/><rect x="11.4" y="243.0" width="1.4" height="2" fill="#4caf50"/><path d="M23.4 240.8 L27 238.4 L30.8 240.8 V244.8 H23.4Z" fill="#eaf0f9" stroke="#86a6d2" stroke-width="0.6"/><rect x="26.4" y="241.8" width="2.6" height="2.6" fill="none" stroke="#3f67a3" stroke-width="0.7"/><path d="M37.2 244.4 L42.6 238.4" stroke="#4f9be0" stroke-width="2"/><path d="M36.6 245.20000000000002 l0.4 -1.6 l1.2 1.2Z" fill="#3f67a3"/><path d="M51.2 238.6 L56.6 244.20000000000002 M56.6 238.6 L51.2 244.20000000000002" stroke="#c4c4c4" stroke-width="0.8"/><path d="M63.4 243.0 H70.6 L67 239.4Z" fill="#b4b4b4"/><path d="M76.8 239.6 H84 L80.4 243.20000000000002Z" fill="#b4b4b4"/><path d="M89.2 236.5 V247" stroke="#cfcfcf" stroke-width="0.6"/><path d="M95 240.20000000000002 Q97.4 241.20000000000002 99.4 238.4 L100.6 239.8 Q100.4 244.0 97.4 244.8 Q94.6 244.20000000000002 95 240.20000000000002Z" fill="#2c5a9c"/><path d="M108.2 240.20000000000002 Q110.6 241.20000000000002 112.6 238.4 L113.8 239.8 Q113.6 244.0 110.6 244.8 Q107.8 244.20000000000002 108.2 240.20000000000002Z" fill="#e2545c"/><rect x="123.4" y="240.4" width="2.2" height="4.6" rx="0.8" fill="#eaf0f9" stroke="#3f67a3" stroke-width="0.7"/><circle cx="124.5" cy="238.6" r="0.9" fill="#3f67a3"/><path d="M133.4 236.5 V247" stroke="#cfcfcf" stroke-width="0.6"/><path d="M139.4 244.20000000000002 L144.4 239.0" stroke="#4a74b0" stroke-width="0.8"/><path d="M142.6 238.4 h2.6 v2.6Z" fill="#2c5a9c"/></svg>
<svg style="left:0px;top:247px" width="154" height="12" viewBox="0 0 154 12"><rect x="0.00" y="0.80" width="153.70" height="10.70" fill="#cce8ff"/></svg>
<svg style="left:4.00px;top:250.20px" width="6" height="6" viewBox="0 0 6 6"><path d="M0.3 1.6 L3 4.4 L5.7 1.6" stroke="#2a2a2a" stroke-width="1.2" fill="none"/></svg>
<div class="t" style="left:13.5px;top:250px;color:#1f4e8c;font-weight:bold;letter-spacing:-0.25px;">Edificio</div>
<svg style="left:0px;top:279px" width="154" height="12" viewBox="0 0 154 12"><rect x="0.00" y="0.80" width="153.70" height="10.70" fill="#f5f5f5"/></svg>
<div class="t" style="left:23.7px;top:260px;color:#2a5a9a;">Cubierta</div>
<div class="t" style="left:71.0px;top:260px;color:#2a5a9a;">8.6500</div>
<div class="t" style="left:97.5px;top:260px;color:#2a5a9a;font-style:italic;">(35)</div>
<div class="t" style="left:23.7px;top:271px;color:#2a5a9a;">Primera planta</div>
<div class="t" style="left:71.0px;top:271px;color:#2a5a9a;">4.6500</div>
<div class="t" style="left:97.5px;top:271px;color:#2a5a9a;font-style:italic;">(36)</div>
<div class="t" style="left:23.7px;top:282px;color:#2a5a9a;">Planta baja</div>
<div class="t" style="left:71.0px;top:282px;color:#2a5a9a;">-0.2000</div>
<div class="t" style="left:97.5px;top:282px;color:#2a5a9a;font-style:italic;">(88)</div>
<svg style="left:141.50px;top:250.20px" width="9" height="6" viewBox="0 0 9 6"><path d="M0.2 3 Q4.5 -0.9 8.8 3 Q4.5 6.9 0.2 3Z" fill="#e9eff8" stroke="#d3deef" stroke-width="0.4"/><ellipse cx="4.5" cy="3" rx="2.35" ry="2.3" fill="#5277b0"/><circle cx="4.1" cy="2.9" r="1.0" fill="#a5b9d9"/></svg>
<svg style="left:141.50px;top:260.80px" width="9" height="6" viewBox="0 0 9 6"><path d="M0.2 3 Q4.5 -0.9 8.8 3 Q4.5 6.9 0.2 3Z" fill="#e9eff8" stroke="#d3deef" stroke-width="0.4"/><ellipse cx="4.5" cy="3" rx="2.35" ry="2.3" fill="#5277b0"/><circle cx="4.1" cy="2.9" r="1.0" fill="#a5b9d9"/></svg>
<svg style="left:141.50px;top:271.50px" width="9" height="6" viewBox="0 0 9 6"><path d="M0.2 3 Q4.5 -0.9 8.8 3 Q4.5 6.9 0.2 3Z" fill="#e9eff8" stroke="#d3deef" stroke-width="0.4"/><ellipse cx="4.5" cy="3" rx="2.35" ry="2.3" fill="#5277b0"/><circle cx="4.1" cy="2.9" r="1.0" fill="#a5b9d9"/></svg>
<svg style="left:141.50px;top:282.10px" width="9" height="6" viewBox="0 0 9 6"><path d="M0.2 3 Q4.5 -0.9 8.8 3 Q4.5 6.9 0.2 3Z" fill="#e9eff8" stroke="#d3deef" stroke-width="0.4"/><ellipse cx="4.5" cy="3" rx="2.35" ry="2.3" fill="#5277b0"/><circle cx="4.1" cy="2.9" r="1.0" fill="#a5b9d9"/></svg>
<svg style="left:74.00px;top:333.60px" width="7" height="1" viewBox="0 0 7 1"><rect x="0.0" y="0" width="0.8" height="0.8" fill="#aaa"/><rect x="1.6" y="0" width="0.8" height="0.8" fill="#aaa"/><rect x="3.2" y="0" width="0.8" height="0.8" fill="#aaa"/><rect x="4.800000000000001" y="0" width="0.8" height="0.8" fill="#aaa"/></svg>
<svg style="left:0px;top:336px" width="154" height="12" viewBox="0 0 154 12"><rect x="0.00" y="0.50" width="153.70" height="10.70" fill="#d9d9d9"/></svg><div class="hdr" style="left:0px;top:336.5px;width:153.7px;background:none;"><div class="t" style="left:2px;">Elementos leídos</div><svg style="left:0;top:0" width="153.7" height="10.7" viewBox="0 0 153.7 10.7"><path d="M134.8 4 L137.5 6.8 L140.2 4" stroke="#111" stroke-width="1.1" fill="none"/><path d="M145.7 3 L150.7 8 M150.7 3 L145.7 8" stroke="#111" stroke-width="1" fill="none"/></svg></div>
<svg style="left:0px;top:347px" width="154" height="193" viewBox="0 0 154 193"><rect x="0.00" y="0.20" width="153.70" height="192.50" fill="#fff"/></svg>
<svg style="left:0px;top:347px" width="154" height="13" viewBox="0 0 154 13"><rect x="0.00" y="0.20" width="153.70" height="12.80" fill="#f0f0f0"/></svg>
<svg style="left:0;top:0" width="160" height="365" viewBox="0 0 160 365"><rect x="2.2" y="349.6" width="2.2" height="8.4" rx="0.8" fill="#dfe8f5" stroke="#4f78b3" stroke-width="0.7"/><rect x="7.6" y="349.6" width="2.2" height="8.4" rx="0.8" fill="#dfe8f5" stroke="#4f78b3" stroke-width="0.7"/><path d="M4.4 353.8 H7.6" stroke="#4f78b3" stroke-width="1.4"/><path d="M2.4 351.8 h1.8 M2.4 355.8 h1.8" stroke="#4f78b3" stroke-width="0.6"/><rect x="15.4" y="349.8" width="8.2" height="8" fill="#eef3fa" stroke="#4f78b3" stroke-width="0.8"/><path d="M19.5 349.8 V357.8 M15.4 353.8 H23.6" stroke="#4f78b3" stroke-width="0.8"/><rect x="29" y="349.8" width="8.2" height="8" fill="#eef3fa" stroke="#4f78b3" stroke-width="0.8"/><path d="M33.1 349.8 V357.8 M29 353.8 H37.2" stroke="#4f78b3" stroke-width="0.8"/><rect x="33.6" y="352.2" width="2.6" height="2.2" fill="#4f78b3" opacity="0.8"/><circle cx="46" cy="353.40000000000003" r="3.3" fill="#eef3fa" stroke="#8aa8d2" stroke-width="0.8"/><path d="M43.4 352.2 Q46 350.8 48.6 352.2" stroke="#8aa8d2" stroke-width="0.5" fill="none"/><path d="M46.6 354.2 l2.6 0 l-1.3 2.4Z" fill="#4f78b3"/><rect x="58.2" y="352.2" width="2.4" height="5.4" rx="0.9" fill="#dfe8f5" stroke="#3f67a3" stroke-width="0.8"/><circle cx="59.4" cy="350.40000000000003" r="0.95" fill="#3f67a3"/></svg>
<svg style="left:4.00px;top:362.50px" width="6" height="6" viewBox="0 0 6 6"><path d="M0.3 1.6 L3 4.4 L5.7 1.6" stroke="#2a2a2a" stroke-width="1.2" fill="none"/></svg>
<div class="t" style="left:24.0px;top:362px;">Modelos</div>
<svg style="left:13.50px;top:361.50px" width="7.5" height="8" viewBox="0 0 7.5 8"><circle cx="4.2" cy="2.8" r="2.6" fill="none" stroke="#3f5f93" stroke-width="0.9"/><circle cx="4.2" cy="2.8" r="0.9" fill="#3f5f93"/><rect x="0.4" y="4.2" width="3.6" height="3.4" fill="#5b7fb0"/><rect x="1.2" y="5" width="2" height="0.7" fill="#fff"/></svg>
<svg style="left:111.60px;top:362.60px" width="9" height="6" viewBox="0 0 9 6"><path d="M0.2 3 Q4.5 -0.9 8.8 3 Q4.5 6.9 0.2 3Z" fill="#e9eff8" stroke="#d3deef" stroke-width="0.4"/><ellipse cx="4.5" cy="3" rx="2.35" ry="2.3" fill="#5277b0"/><circle cx="4.1" cy="2.9" r="1.0" fill="#a5b9d9"/></svg>
<svg style="left:126.90px;top:361.10px" width="8.4" height="9" viewBox="0 0 8.4 9"><path d="M4.2 0.2 L8.1 2.3 L8.1 6.7 L4.2 8.8 L0.3 6.7 L0.3 2.3Z" fill="#41659b"/><path d="M4.2 2.9 L5.9 3.8 L5.9 5.5 L4.2 6.4 L2.5 5.5 L2.5 3.8Z" fill="#c9d6ea"/><circle cx="4.2" cy="4.6" r="0.8" fill="#41659b"/></svg>
<svg style="left:142.60px;top:361.40px" width="7.4" height="8.6" viewBox="0 0 7.4 8.6"><path d="M2 1.2 Q3.8 -0.2 5.4 1 Q6 1.8 5.9 4" stroke="#7f9fcd" stroke-width="0.9" fill="none"/><rect x="0.1" y="3.9" width="7" height="4.3" rx="0.7" fill="#5f82b5"/><rect x="3" y="5.3" width="1.2" height="1.5" fill="#cfdaec"/></svg>
<svg style="left:14.30px;top:373.17px" width="6" height="6" viewBox="0 0 6 6"><path d="M0.3 1.6 L3 4.4 L5.7 1.6" stroke="#2a2a2a" stroke-width="1.2" fill="none"/></svg>
<div class="t" style="left:24.0px;top:373px;">Estructura</div>
<svg style="left:111.60px;top:373.27px" width="9" height="6" viewBox="0 0 9 6"><path d="M0.2 3 Q4.5 -0.9 8.8 3 Q4.5 6.9 0.2 3Z" fill="#e9eff8" stroke="#d3deef" stroke-width="0.4"/><ellipse cx="4.5" cy="3" rx="2.35" ry="2.3" fill="#5277b0"/><circle cx="4.1" cy="2.9" r="1.0" fill="#a5b9d9"/></svg>
<svg style="left:126.90px;top:371.77px" width="8.4" height="9" viewBox="0 0 8.4 9"><path d="M4.2 0.2 L8.1 2.3 L8.1 6.7 L4.2 8.8 L0.3 6.7 L0.3 2.3Z" fill="#41659b"/><path d="M4.2 2.9 L5.9 3.8 L5.9 5.5 L4.2 6.4 L2.5 5.5 L2.5 3.8Z" fill="#c9d6ea"/><circle cx="4.2" cy="4.6" r="0.8" fill="#41659b"/></svg>
<svg style="left:142.60px;top:372.07px" width="7.4" height="8.6" viewBox="0 0 7.4 8.6"><path d="M2 1.2 Q3.8 -0.2 5.4 1 Q6 1.8 5.9 4" stroke="#7f9fcd" stroke-width="0.9" fill="none"/><rect x="0.1" y="3.9" width="7" height="4.3" rx="0.7" fill="#5f82b5"/><rect x="3" y="5.3" width="1.2" height="1.5" fill="#cfdaec"/></svg>
<div class="t" style="left:34.0px;top:383px;">Estructura</div>
<svg style="left:111.60px;top:383.94px" width="9" height="6" viewBox="0 0 9 6"><path d="M0.2 3 Q4.5 -0.9 8.8 3 Q4.5 6.9 0.2 3Z" fill="#e9eff8" stroke="#d3deef" stroke-width="0.4"/><ellipse cx="4.5" cy="3" rx="2.35" ry="2.3" fill="#5277b0"/><circle cx="4.1" cy="2.9" r="1.0" fill="#a5b9d9"/></svg>
<svg style="left:126.90px;top:382.44px" width="8.4" height="9" viewBox="0 0 8.4 9"><path d="M4.2 0.2 L8.1 2.3 L8.1 6.7 L4.2 8.8 L0.3 6.7 L0.3 2.3Z" fill="#41659b"/><path d="M4.2 2.9 L5.9 3.8 L5.9 5.5 L4.2 6.4 L2.5 5.5 L2.5 3.8Z" fill="#c9d6ea"/><circle cx="4.2" cy="4.6" r="0.8" fill="#41659b"/></svg>
<svg style="left:142.60px;top:382.74px" width="7.4" height="8.6" viewBox="0 0 7.4 8.6"><path d="M2 1.2 Q3.8 -0.2 5.4 1 Q6 1.8 5.9 4" stroke="#7f9fcd" stroke-width="0.9" fill="none"/><rect x="0.1" y="3.9" width="7" height="4.3" rx="0.7" fill="#5f82b5"/><rect x="3" y="5.3" width="1.2" height="1.5" fill="#cfdaec"/></svg>
<div class="t" style="left:34.0px;top:394px;">Estructura (Modelo anal...</div>
<svg style="left:111.60px;top:394.11px" width="9" height="7" viewBox="0 0 9 7"><path d="M0.2 3.5 Q4.5 -0.4 8.8 3.5 Q4.5 7.4 0.2 3.5Z" fill="#f0f1f3" stroke="#e2e4e8" stroke-width="0.4"/><ellipse cx="4.5" cy="3.5" rx="2.2" ry="2.1" fill="#c2c5ca"/><path d="M1.2 0.4 L8 6.8" stroke="#7f9cc8" stroke-width="0.7"/><path d="M1.2 0.4 L4 3" stroke="#8a8a8a" stroke-width="0.7"/></svg>
<svg style="left:126.90px;top:393.11px" width="8.4" height="9" viewBox="0 0 8.4 9"><path d="M4.2 0.2 L8.1 2.3 L8.1 6.7 L4.2 8.8 L0.3 6.7 L0.3 2.3Z" fill="#41659b"/><path d="M4.2 2.9 L5.9 3.8 L5.9 5.5 L4.2 6.4 L2.5 5.5 L2.5 3.8Z" fill="#c9d6ea"/><circle cx="4.2" cy="4.6" r="0.8" fill="#41659b"/></svg>
<svg style="left:142.60px;top:393.41px" width="7.4" height="8.6" viewBox="0 0 7.4 8.6"><path d="M2 1.2 Q3.8 -0.2 5.4 1 Q6 1.8 5.9 4" stroke="#7f9fcd" stroke-width="0.9" fill="none"/><rect x="0.1" y="3.9" width="7" height="4.3" rx="0.7" fill="#5f82b5"/><rect x="3" y="5.3" width="1.2" height="1.5" fill="#cfdaec"/></svg>
<div class="t" style="left:34.0px;top:405px;">Estructura-Armaduras</div>
<svg style="left:111.60px;top:404.78px" width="9" height="7" viewBox="0 0 9 7"><path d="M0.2 3.5 Q4.5 -0.4 8.8 3.5 Q4.5 7.4 0.2 3.5Z" fill="#f0f1f3" stroke="#e2e4e8" stroke-width="0.4"/><ellipse cx="4.5" cy="3.5" rx="2.2" ry="2.1" fill="#c2c5ca"/><path d="M1.2 0.4 L8 6.8" stroke="#7f9cc8" stroke-width="0.7"/><path d="M1.2 0.4 L4 3" stroke="#8a8a8a" stroke-width="0.7"/></svg>
<svg style="left:126.90px;top:403.78px" width="8.4" height="9" viewBox="0 0 8.4 9"><path d="M4.2 0.2 L8.1 2.3 L8.1 6.7 L4.2 8.8 L0.3 6.7 L0.3 2.3Z" fill="#41659b"/><path d="M4.2 2.9 L5.9 3.8 L5.9 5.5 L4.2 6.4 L2.5 5.5 L2.5 3.8Z" fill="#c9d6ea"/><circle cx="4.2" cy="4.6" r="0.8" fill="#41659b"/></svg>
<svg style="left:142.60px;top:404.08px" width="7.4" height="8.6" viewBox="0 0 7.4 8.6"><path d="M2 1.2 Q3.8 -0.2 5.4 1 Q6 1.8 5.9 4" stroke="#7f9fcd" stroke-width="0.9" fill="none"/><rect x="0.1" y="3.9" width="7" height="4.3" rx="0.7" fill="#5f82b5"/><rect x="3" y="5.3" width="1.2" height="1.5" fill="#cfdaec"/></svg>
<svg style="left:4.00px;top:415.85px" width="6" height="6" viewBox="0 0 6 6"><path d="M0.3 1.6 L3 4.4 L5.7 1.6" stroke="#2a2a2a" stroke-width="1.2" fill="none"/></svg>
<div class="t" style="left:24.0px;top:415px;">Categorías</div>
<svg style="left:13.00px;top:414.85px" width="8" height="8" viewBox="0 0 8 8"><path d="M4 0.5 V4 M1.2 6 V4 H6.8 V6" stroke="#4b6fa5" stroke-width="0.7" fill="none"/><rect x="3" y="0.3" width="2" height="2" fill="#4b6fa5"/><rect x="0.2" y="5.6" width="2" height="2" fill="#4b6fa5"/><rect x="3" y="5.6" width="2" height="2" fill="#4b6fa5"/><rect x="5.8" y="5.6" width="2" height="2" fill="#4b6fa5"/></svg>
<svg style="left:111.60px;top:415.95px" width="9" height="6" viewBox="0 0 9 6"><path d="M0.2 3 Q4.5 -0.9 8.8 3 Q4.5 6.9 0.2 3Z" fill="#e9eff8" stroke="#d3deef" stroke-width="0.4"/><ellipse cx="4.5" cy="3" rx="2.35" ry="2.3" fill="#5277b0"/><circle cx="4.1" cy="2.9" r="1.0" fill="#a5b9d9"/></svg>
<svg style="left:126.90px;top:414.45px" width="8.4" height="9" viewBox="0 0 8.4 9"><path d="M4.2 0.2 L8.1 2.3 L8.1 6.7 L4.2 8.8 L0.3 6.7 L0.3 2.3Z" fill="#41659b"/><path d="M4.2 2.9 L5.9 3.8 L5.9 5.5 L4.2 6.4 L2.5 5.5 L2.5 3.8Z" fill="#c9d6ea"/><circle cx="4.2" cy="4.6" r="0.8" fill="#41659b"/></svg>
<svg style="left:142.60px;top:414.75px" width="7.4" height="8.6" viewBox="0 0 7.4 8.6"><path d="M2 1.2 Q3.8 -0.2 5.4 1 Q6 1.8 5.9 4" stroke="#7f9fcd" stroke-width="0.9" fill="none"/><rect x="0.1" y="3.9" width="7" height="4.3" rx="0.7" fill="#5f82b5"/><rect x="3" y="5.3" width="1.2" height="1.5" fill="#cfdaec"/></svg>
<div class="t" style="left:24.0px;top:426px;">Barras de armado</div>
<svg style="left:111.60px;top:426.62px" width="9" height="6" viewBox="0 0 9 6"><path d="M0.2 3 Q4.5 -0.9 8.8 3 Q4.5 6.9 0.2 3Z" fill="#e9eff8" stroke="#d3deef" stroke-width="0.4"/><ellipse cx="4.5" cy="3" rx="2.35" ry="2.3" fill="#5277b0"/><circle cx="4.1" cy="2.9" r="1.0" fill="#a5b9d9"/></svg>
<svg style="left:126.90px;top:425.12px" width="8.4" height="9" viewBox="0 0 8.4 9"><path d="M4.2 0.2 L8.1 2.3 L8.1 6.7 L4.2 8.8 L0.3 6.7 L0.3 2.3Z" fill="#41659b"/><path d="M4.2 2.9 L5.9 3.8 L5.9 5.5 L4.2 6.4 L2.5 5.5 L2.5 3.8Z" fill="#c9d6ea"/><circle cx="4.2" cy="4.6" r="0.8" fill="#41659b"/></svg>
<svg style="left:142.60px;top:425.42px" width="7.4" height="8.6" viewBox="0 0 7.4 8.6"><path d="M2 1.2 Q3.8 -0.2 5.4 1 Q6 1.8 5.9 4" stroke="#7f9fcd" stroke-width="0.9" fill="none"/><rect x="0.1" y="3.9" width="7" height="4.3" rx="0.7" fill="#5f82b5"/><rect x="3" y="5.3" width="1.2" height="1.5" fill="#cfdaec"/></svg>
<div class="t" style="left:24.0px;top:437px;">Cimentaciones</div>
<svg style="left:111.60px;top:437.29px" width="9" height="6" viewBox="0 0 9 6"><path d="M0.2 3 Q4.5 -0.9 8.8 3 Q4.5 6.9 0.2 3Z" fill="#e9eff8" stroke="#d3deef" stroke-width="0.4"/><ellipse cx="4.5" cy="3" rx="2.35" ry="2.3" fill="#5277b0"/><circle cx="4.1" cy="2.9" r="1.0" fill="#a5b9d9"/></svg>
<svg style="left:126.90px;top:435.79px" width="8.4" height="9" viewBox="0 0 8.4 9"><path d="M4.2 0.2 L8.1 2.3 L8.1 6.7 L4.2 8.8 L0.3 6.7 L0.3 2.3Z" fill="#41659b"/><path d="M4.2 2.9 L5.9 3.8 L5.9 5.5 L4.2 6.4 L2.5 5.5 L2.5 3.8Z" fill="#c9d6ea"/><circle cx="4.2" cy="4.6" r="0.8" fill="#41659b"/></svg>
<svg style="left:142.60px;top:436.09px" width="7.4" height="8.6" viewBox="0 0 7.4 8.6"><path d="M2 1.2 Q3.8 -0.2 5.4 1 Q6 1.8 5.9 4" stroke="#7f9fcd" stroke-width="0.9" fill="none"/><rect x="0.1" y="3.9" width="7" height="4.3" rx="0.7" fill="#5f82b5"/><rect x="3" y="5.3" width="1.2" height="1.5" fill="#cfdaec"/></svg>
<div class="t" style="left:24.0px;top:447px;">Elemento del modelo analít...</div>
<svg style="left:111.60px;top:447.96px" width="9" height="6" viewBox="0 0 9 6"><path d="M0.2 3 Q4.5 -0.9 8.8 3 Q4.5 6.9 0.2 3Z" fill="#e9eff8" stroke="#d3deef" stroke-width="0.4"/><ellipse cx="4.5" cy="3" rx="2.35" ry="2.3" fill="#5277b0"/><circle cx="4.1" cy="2.9" r="1.0" fill="#a5b9d9"/></svg>
<svg style="left:126.90px;top:446.46px" width="8.4" height="9" viewBox="0 0 8.4 9"><path d="M4.2 0.2 L8.1 2.3 L8.1 6.7 L4.2 8.8 L0.3 6.7 L0.3 2.3Z" fill="#41659b"/><path d="M4.2 2.9 L5.9 3.8 L5.9 5.5 L4.2 6.4 L2.5 5.5 L2.5 3.8Z" fill="#c9d6ea"/><circle cx="4.2" cy="4.6" r="0.8" fill="#41659b"/></svg>
<svg style="left:142.60px;top:446.76px" width="7.4" height="8.6" viewBox="0 0 7.4 8.6"><path d="M2 1.2 Q3.8 -0.2 5.4 1 Q6 1.8 5.9 4" stroke="#7f9fcd" stroke-width="0.9" fill="none"/><rect x="0.1" y="3.9" width="7" height="4.3" rx="0.7" fill="#5f82b5"/><rect x="3" y="5.3" width="1.2" height="1.5" fill="#cfdaec"/></svg>
<div class="t" style="left:24.0px;top:458px;">Forjados</div>
<svg style="left:111.60px;top:458.63px" width="9" height="6" viewBox="0 0 9 6"><path d="M0.2 3 Q4.5 -0.9 8.8 3 Q4.5 6.9 0.2 3Z" fill="#e9eff8" stroke="#d3deef" stroke-width="0.4"/><ellipse cx="4.5" cy="3" rx="2.35" ry="2.3" fill="#5277b0"/><circle cx="4.1" cy="2.9" r="1.0" fill="#a5b9d9"/></svg>
<svg style="left:126.90px;top:457.13px" width="8.4" height="9" viewBox="0 0 8.4 9"><path d="M4.2 0.2 L8.1 2.3 L8.1 6.7 L4.2 8.8 L0.3 6.7 L0.3 2.3Z" fill="#41659b"/><path d="M4.2 2.9 L5.9 3.8 L5.9 5.5 L4.2 6.4 L2.5 5.5 L2.5 3.8Z" fill="#c9d6ea"/><circle cx="4.2" cy="4.6" r="0.8" fill="#41659b"/></svg>
<svg style="left:142.60px;top:457.43px" width="7.4" height="8.6" viewBox="0 0 7.4 8.6"><path d="M2 1.2 Q3.8 -0.2 5.4 1 Q6 1.8 5.9 4" stroke="#7f9fcd" stroke-width="0.9" fill="none"/><rect x="0.1" y="3.9" width="7" height="4.3" rx="0.7" fill="#5f82b5"/><rect x="3" y="5.3" width="1.2" height="1.5" fill="#cfdaec"/></svg>
<div class="t" style="left:24.0px;top:469px;">Pilares</div>
<svg style="left:111.60px;top:469.30px" width="9" height="6" viewBox="0 0 9 6"><path d="M0.2 3 Q4.5 -0.9 8.8 3 Q4.5 6.9 0.2 3Z" fill="#e9eff8" stroke="#d3deef" stroke-width="0.4"/><ellipse cx="4.5" cy="3" rx="2.35" ry="2.3" fill="#5277b0"/><circle cx="4.1" cy="2.9" r="1.0" fill="#a5b9d9"/></svg>
<svg style="left:126.90px;top:467.80px" width="8.4" height="9" viewBox="0 0 8.4 9"><path d="M4.2 0.2 L8.1 2.3 L8.1 6.7 L4.2 8.8 L0.3 6.7 L0.3 2.3Z" fill="#41659b"/><path d="M4.2 2.9 L5.9 3.8 L5.9 5.5 L4.2 6.4 L2.5 5.5 L2.5 3.8Z" fill="#c9d6ea"/><circle cx="4.2" cy="4.6" r="0.8" fill="#41659b"/></svg>
<svg style="left:142.60px;top:468.10px" width="7.4" height="8.6" viewBox="0 0 7.4 8.6"><path d="M2 1.2 Q3.8 -0.2 5.4 1 Q6 1.8 5.9 4" stroke="#7f9fcd" stroke-width="0.9" fill="none"/><rect x="0.1" y="3.9" width="7" height="4.3" rx="0.7" fill="#5f82b5"/><rect x="3" y="5.3" width="1.2" height="1.5" fill="#cfdaec"/></svg>
<svg style="left:157px;top:76px" width="652" height="12" viewBox="0 0 652 12"><rect x="0.80" y="0.80" width="651.00" height="10.70" fill="#d9d9d9"/></svg><div class="hdr" style="left:157.8px;top:76.8px;width:651px;background:none;"><div class="t" style="left:2px;">Área de trabajo</div></div>
<svg style="left:157px;top:87px" width="652" height="453" viewBox="0 0 652 453"><rect x="0.80" y="0.50" width="651.00" height="452.20" fill="#fff"/></svg>
<svg style="left:157px;top:87px" width="652" height="17" viewBox="0 0 652 17"><rect x="0.80" y="0.50" width="651.00" height="16.50" fill="#f0f0f0"/></svg>
<svg style="left:0;top:0" width="820" height="110" viewBox="0 0 820 110"><path d="M680.8 92.4 V96.6 L677 99.4 M680.8 96.6 L684.6 99.4" stroke="#7a9cc6" stroke-width="0.8" fill="none"/><path d="M690.4 94.2 L692.6 92.2 H698 V97.6 L695.8 99.6 H690.4Z" fill="#cfdcef" stroke="#3f5f93" stroke-width="0.7"/><path d="M690.4 94.2 H695.8 V99.6 M695.8 94.2 L698 92.2" stroke="#3f5f93" stroke-width="0.6" fill="none"/><ellipse cx="706.6" cy="96" rx="4.2" ry="2.2" fill="none" stroke="#555" stroke-width="0.6"/><circle cx="706.4" cy="95.2" r="1.9" fill="#111"/><path d="M709.4 97.4 l1.4 1.6" stroke="#333" stroke-width="0.8"/><ellipse cx="719.4" cy="97.2" rx="4.2" ry="1.9" fill="none" stroke="#444" stroke-width="0.7"/><path d="M719.4 92.2 V97.6 M717.8 93.6 L719.4 92 L721 93.6" stroke="#444" stroke-width="0.7" fill="none"/><path d="M726.6 90 V102" stroke="#d0d0d0" stroke-width="0.6"/><rect x="732.4" y="92.8" width="3.2" height="6.4" fill="#8fb4e4" stroke="#3f5f93" stroke-width="0.6"/><rect x="735.6" y="92.8" width="3.2" height="6.4" fill="#e8545c" stroke="#8a2a30" stroke-width="0.5"/><rect x="745" y="92.8" width="6.6" height="6.4" fill="#44c24c" stroke="#2a8a34" stroke-width="0.5"/><rect x="747.4" y="94.4" width="4.2" height="4.8" fill="#5a8edc"/><path d="M745 99.2 L751.6 92.8" stroke="#e8f2e8" stroke-width="0.5"/><rect x="757.6" y="92.8" width="6.8" height="6.4" fill="#e4ecf8" stroke="#3f5f93" stroke-width="0.7"/><rect x="757.6" y="92.8" width="6.8" height="2.2" fill="#5a7fc0"/><rect x="758.8" y="96.4" width="4.4" height="1.6" fill="#5a7fc0"/><path d="M774 92 L777.6 94 V98.2 L774 100.2 L770.4 98.2 V94Z" fill="#9fb2c8" stroke="#3f5f73" stroke-width="0.6"/><path d="M770.4 94 L774 96 L777.6 94 M774 96 V100.2" stroke="#3f5f73" stroke-width="0.5" fill="none"/><rect x="771.4" y="95.6" width="1.8" height="2.4" fill="#e0a040"/><rect x="774.8" y="95.6" width="1.8" height="2.4" fill="#4a9ad8"/><path d="M782.6 96 Q787 91.8 791.4 96 Q787 100.2 782.6 96Z" fill="#111"/><circle cx="787" cy="96" r="1.5" fill="#fff"/><circle cx="787" cy="96" r="0.8" fill="#111"/><path d="M783.6 99 L790.4 92.6" stroke="#444" stroke-width="0.5"/><path d="M794.6 90 V102" stroke="#d0d0d0" stroke-width="0.6"/><circle cx="802.6" cy="96.4" r="3.2" fill="#f6f6f6" stroke="#666" stroke-width="0.7"/><path d="M802.6 94.6 V96.6 H804" stroke="#666" stroke-width="0.5" fill="none"/><path d="M798.6 93.8 L800.6 92 L801.6 94.4Z" fill="#555"/></svg>
<svg style="left:0;top:0" width="1024" height="550" viewBox="0 0 1024 550"><defs><linearGradient id="cg1" x1="0" x2="1" y1="0" y2="0"><stop offset="0" stop-color="#a4a9a7"/><stop offset="0.3" stop-color="#c3c6c4"/><stop offset="1" stop-color="#c6c9c7"/></linearGradient><linearGradient id="cg2" x1="0" x2="1" y1="0" y2="0"><stop offset="0" stop-color="#c9ccca"/><stop offset="0.5" stop-color="#d1d3d1"/><stop offset="0.88" stop-color="#cccfcd"/><stop offset="1" stop-color="#b4b8b6"/></linearGradient><clipPath id="wa"><rect x="157.8" y="104" width="651" height="435.7"/></clipPath></defs><g clip-path="url(#wa)"><polygon points="188.0,351.5 339.0,343.0 520.0,330.0 643.0,337.6 787.0,429.6 772.0,436.0 341.0,465.5 186.0,362.5" fill="#92a8b0" /><path d="M184.6 355.7 L621.2 323.2" stroke="#667b83" stroke-width="1.2" stroke-dasharray="2.6 1.2" fill="none"/><polygon points="187.4,359.7 630.6,326.7 633.1,330.3 200.0,362.6" fill="#b5c9cf" /><path d="M196.0 363.4 L633.1 330.8" stroke="#667b83" stroke-width="1.2" stroke-dasharray="2.6 1.2" fill="none"/><polygon points="206.5,370.2 650.6,337.1 655.4,344.6 221.3,376.9" fill="#b5c9cf" /><path d="M217.3 377.7 L655.4 345.1" stroke="#667b83" stroke-width="1.2" stroke-dasharray="2.6 1.2" fill="none"/><polygon points="228.8,384.9 674.0,351.8 679.0,359.7 243.9,392.1" fill="#b5c9cf" /><path d="M239.9 392.9 L679.0 360.2" stroke="#667b83" stroke-width="1.2" stroke-dasharray="2.6 1.2" fill="none"/><polygon points="251.8,400.3 698.0,367.0 703.2,375.1 267.0,407.6" fill="#b5c9cf" /><path d="M263.0 408.4 L703.2 375.6" stroke="#667b83" stroke-width="1.2" stroke-dasharray="2.6 1.2" fill="none"/><polygon points="274.1,415.5 721.3,382.2 726.3,389.9 289.1,422.5" fill="#b5c9cf" /><path d="M285.1 423.3 L726.3 390.4" stroke="#667b83" stroke-width="1.2" stroke-dasharray="2.6 1.2" fill="none"/><polygon points="296.8,430.6 745.0,397.2 750.1,405.2 311.9,437.8" fill="#b5c9cf" /><path d="M307.9 438.6 L750.1 405.7" stroke="#667b83" stroke-width="1.2" stroke-dasharray="2.6 1.2" fill="none"/><polygon points="311.8,443.0 760.5,409.6 763.4,413.7 324.6,446.4" fill="#b5c9cf" /><path d="M320.6 447.2 L763.4 414.2" stroke="#667b83" stroke-width="1.2" stroke-dasharray="2.6 1.2" fill="none"/><polygon points="330.9,453.9 780.6,420.4 785.3,427.7 345.6,460.5" fill="#b5c9cf" /><polygon points="353.0,463.2 772.0,432.2 772.0,436.0 353.0,467.2" fill="#cdd1cf" /><polygon points="353.0,467.2 772.0,436.0 772.0,439.6 353.0,470.8" fill="#b0b5b3" /><polygon points="390.6,382.6 486.6,452.5 486.6,459.7 390.6,389.8" fill="#7a9098" /><polygon points="391.6,380.2 487.6,450.1 493.6,453.3 486.6,452.5 390.6,382.6" fill="#55656a" /><polygon points="395.8,394.0 409.4,391.6 421.9,398.2 403.7,397.8" fill="#4f5d61" /><polygon points="395.8,394.0 403.7,397.8 403.7,408.0 395.8,404.0" fill="#768c94" /><polygon points="403.7,397.8 412.8,397.1 412.8,407.3 403.7,408.0" fill="#8ea4ac" /><polygon points="418.4,410.5 432.0,408.1 444.5,414.7 426.3,414.3" fill="#4f5d61" /><polygon points="418.4,410.5 426.3,414.3 426.3,424.5 418.4,420.5" fill="#768c94" /><polygon points="426.3,414.3 435.4,413.6 435.4,423.8 426.3,424.5" fill="#8ea4ac" /><polygon points="440.9,425.5 454.5,423.1 467.0,429.7 448.8,429.3" fill="#4f5d61" /><polygon points="440.9,425.5 448.8,429.3 448.8,439.5 440.9,435.5" fill="#768c94" /><polygon points="448.8,429.3 457.9,428.6 457.9,438.8 448.8,439.5" fill="#8ea4ac" /><polygon points="453.4,434.3 467.0,431.9 479.5,438.5 461.3,438.1" fill="#4f5d61" /><polygon points="453.4,434.3 461.3,438.1 461.3,448.3 453.4,444.3" fill="#768c94" /><polygon points="461.3,438.1 470.4,437.4 470.4,447.6 461.3,448.3" fill="#8ea4ac" /><polygon points="538.6,371.4 638.9,440.4 638.9,447.6 538.6,378.6" fill="#7a9098" /><polygon points="539.6,369.0 639.9,438.0 645.9,441.2 638.9,440.4 538.6,371.4" fill="#55656a" /><polygon points="543.8,382.8 557.4,380.4 569.9,387.0 551.7,386.6" fill="#4f5d61" /><polygon points="543.8,382.8 551.7,386.6 551.7,396.8 543.8,392.8" fill="#768c94" /><polygon points="551.7,386.6 560.8,385.9 560.8,396.1 551.7,396.8" fill="#8ea4ac" /><polygon points="566.4,399.0 580.0,396.6 592.5,403.2 574.3,402.8" fill="#4f5d61" /><polygon points="566.4,399.0 574.3,402.8 574.3,413.0 566.4,409.0" fill="#768c94" /><polygon points="574.3,402.8 583.4,402.1 583.4,412.3 574.3,413.0" fill="#8ea4ac" /><polygon points="588.8,414.0 602.4,411.6 614.9,418.2 596.7,417.8" fill="#4f5d61" /><polygon points="588.8,414.0 596.7,417.8 596.7,428.0 588.8,424.0" fill="#768c94" /><polygon points="596.7,417.8 605.8,417.1 605.8,427.3 596.7,428.0" fill="#8ea4ac" /><polygon points="601.2,422.6 614.8,420.2 627.3,426.8 609.1,426.4" fill="#4f5d61" /><polygon points="601.2,422.6 609.1,426.4 609.1,436.6 601.2,432.6" fill="#768c94" /><polygon points="609.1,426.4 618.2,425.7 618.2,435.9 609.1,436.6" fill="#8ea4ac" /><polygon points="683.4,361.4 782.5,429.9 782.5,437.1 683.4,368.6" fill="#7a9098" /><polygon points="684.4,359.0 783.5,427.5 789.5,430.7 782.5,429.9 683.4,361.4" fill="#55656a" /><polygon points="688.6,372.8 702.2,370.4 714.7,377.0 696.5,376.6" fill="#4f5d61" /><polygon points="688.6,372.8 696.5,376.6 696.5,386.8 688.6,382.8" fill="#768c94" /><polygon points="696.5,376.6 705.6,375.9 705.6,386.1 696.5,386.8" fill="#8ea4ac" /><polygon points="710.0,387.9 723.6,385.5 736.1,392.1 717.9,391.7" fill="#4f5d61" /><polygon points="710.0,387.9 717.9,391.7 717.9,401.9 710.0,397.9" fill="#768c94" /><polygon points="717.9,391.7 727.0,391.0 727.0,401.2 717.9,401.9" fill="#8ea4ac" /><polygon points="732.4,403.0 746.0,400.6 758.5,407.2 740.3,406.8" fill="#4f5d61" /><polygon points="732.4,403.0 740.3,406.8 740.3,417.0 732.4,413.0" fill="#768c94" /><polygon points="740.3,406.8 749.4,406.1 749.4,416.3 740.3,417.0" fill="#8ea4ac" /><polygon points="745.1,411.7 758.7,409.3 771.2,415.9 753.0,415.5" fill="#4f5d61" /><polygon points="745.1,411.7 753.0,415.5 753.0,425.7 745.1,421.7" fill="#768c94" /><polygon points="753.0,415.5 762.1,414.8 762.1,425.0 753.0,425.7" fill="#8ea4ac" /><polygon points="186.2,358.6 343.2,464.2 343.2,471.4 186.2,365.8" fill="#525a5b" /><polygon points="187.2,356.2 344.2,461.8 350.2,465.0 343.2,464.2 186.2,358.6" fill="#74868a" /><polygon points="173.0,356.2 186.6,353.8 199.1,360.4 180.9,360.0" fill="#66777b" /><polygon points="173.0,356.2 180.9,360.0 180.9,370.2 173.0,366.2" fill="#727675" /><polygon points="180.9,360.0 190.0,359.3 190.0,369.5 180.9,370.2" fill="#a3a7a5" /><polygon points="180.8,362.7 194.4,360.3 206.9,366.9 188.7,366.5" fill="#66777b" /><polygon points="180.8,362.7 188.7,366.5 188.7,376.7 180.8,372.7" fill="#727675" /><polygon points="188.7,366.5 197.8,365.8 197.8,376.0 188.7,376.7" fill="#a3a7a5" /><polygon points="202.1,377.0 215.7,374.6 228.2,381.2 210.0,380.8" fill="#66777b" /><polygon points="202.1,377.0 210.0,380.8 210.0,391.0 202.1,387.0" fill="#727675" /><polygon points="210.0,380.8 219.1,380.1 219.1,390.3 210.0,391.0" fill="#a3a7a5" /><polygon points="224.7,392.2 238.3,389.8 250.8,396.4 232.6,396.0" fill="#66777b" /><polygon points="224.7,392.2 232.6,396.0 232.6,406.2 224.7,402.2" fill="#727675" /><polygon points="232.6,396.0 241.7,395.3 241.7,405.5 232.6,406.2" fill="#a3a7a5" /><polygon points="247.8,407.7 261.4,405.3 273.9,411.9 255.7,411.5" fill="#66777b" /><polygon points="247.8,407.7 255.7,411.5 255.7,421.7 247.8,417.7" fill="#727675" /><polygon points="255.7,411.5 264.8,410.8 264.8,421.0 255.7,421.7" fill="#a3a7a5" /><polygon points="269.9,422.6 283.5,420.2 296.0,426.8 277.8,426.4" fill="#66777b" /><polygon points="269.9,422.6 277.8,426.4 277.8,436.6 269.9,432.6" fill="#727675" /><polygon points="277.8,426.4 286.9,425.7 286.9,435.9 277.8,436.6" fill="#a3a7a5" /><polygon points="292.7,437.9 306.3,435.5 318.8,442.1 300.6,441.7" fill="#66777b" /><polygon points="292.7,437.9 300.6,441.7 300.6,451.9 292.7,447.9" fill="#727675" /><polygon points="300.6,441.7 309.7,441.0 309.7,451.2 300.6,451.9" fill="#a3a7a5" /><polygon points="305.4,446.5 319.0,444.1 331.5,450.7 313.3,450.3" fill="#66777b" /><polygon points="305.4,446.5 313.3,450.3 313.3,460.5 305.4,456.5" fill="#727675" /><polygon points="313.3,450.3 322.4,449.6 322.4,459.8 313.3,460.5" fill="#a3a7a5" /><polygon points="329.6,460.1 336.6,464.5 336.6,474.0 329.6,469.6" fill="#8b8f8e" /><polygon points="336.6,464.5 353.6,463.2 353.6,472.7 336.6,474.0" fill="#a8acaa" /><polygon points="329.6,460.1 346.6,458.8 353.6,463.2 336.6,464.5" fill="#6f7b7e" /><polygon points="473.0,448.4 480.0,452.8 480.0,462.3 473.0,457.9" fill="#8b8f8e" /><polygon points="480.0,452.8 497.0,451.5 497.0,461.0 480.0,462.3" fill="#a8acaa" /><polygon points="473.0,448.4 490.0,447.1 497.0,451.5 480.0,452.8" fill="#6f7b7e" /><polygon points="625.3,436.3 632.3,440.7 632.3,450.2 625.3,445.8" fill="#8b8f8e" /><polygon points="632.3,440.7 649.3,439.4 649.3,448.9 632.3,450.2" fill="#a8acaa" /><polygon points="625.3,436.3 642.3,435.0 649.3,439.4 632.3,440.7" fill="#6f7b7e" /><polygon points="666.2,433.3 673.2,437.7 673.2,447.2 666.2,442.8" fill="#8b8f8e" /><polygon points="673.2,437.7 690.2,436.4 690.2,445.9 673.2,447.2" fill="#a8acaa" /><polygon points="666.2,433.3 683.2,432.0 690.2,436.4 673.2,437.7" fill="#6f7b7e" /><polygon points="768.9,425.8 775.9,430.2 775.9,439.7 768.9,435.3" fill="#8b8f8e" /><polygon points="775.9,430.2 792.9,428.9 792.9,438.4 775.9,439.7" fill="#a8acaa" /><polygon points="768.9,425.8 785.9,424.5 792.9,428.9 775.9,430.2" fill="#6f7b7e" /><polygon points="180.0,276.0 181.7,276.0 181.7,356.6 180.0,355.6" fill="#7a7f7e" /><polygon points="181.7,276.0 189.2,276.0 189.2,356.0 181.7,356.6" fill="url(#cg2)" /><polygon points="191.4,283.7 193.1,283.7 193.1,364.3 191.4,363.3" fill="#7a7f7e" /><polygon points="193.1,283.7 200.6,283.7 200.6,363.7 193.1,364.3" fill="url(#cg2)" /><polygon points="212.7,297.9 214.4,297.9 214.4,378.6 212.7,377.6" fill="#7a7f7e" /><polygon points="214.4,297.9 221.9,297.9 221.9,378.0 214.4,378.6" fill="url(#cg2)" /><polygon points="235.3,313.0 237.0,313.0 237.0,393.8 235.3,392.8" fill="#7a7f7e" /><polygon points="237.0,313.0 244.5,313.0 244.5,393.2 237.0,393.8" fill="url(#cg2)" /><polygon points="258.4,328.4 260.1,328.4 260.1,409.3 258.4,408.3" fill="#7a7f7e" /><polygon points="260.1,328.4 267.6,328.4 267.6,408.7 260.1,409.3" fill="url(#cg2)" /><polygon points="280.5,343.2 282.2,343.2 282.2,424.2 280.5,423.2" fill="#7a7f7e" /><polygon points="282.2,343.2 289.7,343.2 289.7,423.6 282.2,424.2" fill="url(#cg2)" /><polygon points="303.3,358.4 305.0,358.4 305.0,439.5 303.3,438.5" fill="#7a7f7e" /><polygon points="305.0,358.4 312.5,358.4 312.5,438.9 305.0,439.5" fill="url(#cg2)" /><polygon points="316.0,366.9 317.7,366.9 317.7,448.1 316.0,447.1" fill="#7a7f7e" /><polygon points="317.7,366.9 325.2,366.9 325.2,447.5 317.7,448.1" fill="url(#cg2)" /><polygon points="337.0,380.9 338.7,380.9 338.7,462.2 337.0,461.2" fill="#7a7f7e" /><polygon points="338.7,380.9 346.2,380.9 346.2,461.6 338.7,462.2" fill="url(#cg2)" /><polygon points="406.4,340.0 408.1,340.0 408.1,395.6 406.4,394.6" fill="#7a7f7e" /><polygon points="408.1,340.0 415.8,340.0 415.8,395.0 408.1,395.6" fill="url(#cg2)" /><polygon points="429.0,340.0 430.7,340.0 430.7,412.1 429.0,411.1" fill="#7a7f7e" /><polygon points="430.7,340.0 438.4,340.0 438.4,411.5 430.7,412.1" fill="url(#cg2)" /><polygon points="451.5,340.0 453.2,340.0 453.2,427.1 451.5,426.1" fill="#7a7f7e" /><polygon points="453.2,340.0 460.9,340.0 460.9,426.5 453.2,427.1" fill="url(#cg2)" /><polygon points="464.0,340.0 465.7,340.0 465.7,435.9 464.0,434.9" fill="#7a7f7e" /><polygon points="465.7,340.0 473.4,340.0 473.4,435.3 465.7,435.9" fill="url(#cg2)" /><polygon points="480.4,340.0 482.1,340.0 482.1,450.5 480.4,449.5" fill="#7a7f7e" /><polygon points="482.1,340.0 489.8,340.0 489.8,449.9 482.1,450.5" fill="url(#cg2)" /><polygon points="554.4,340.0 556.1,340.0 556.1,384.4 554.4,383.4" fill="#7a7f7e" /><polygon points="556.1,340.0 563.6,340.0 563.6,383.8 556.1,384.4" fill="url(#cg2)" /><polygon points="577.0,340.0 578.7,340.0 578.7,400.6 577.0,399.6" fill="#7a7f7e" /><polygon points="578.7,340.0 586.2,340.0 586.2,400.0 578.7,400.6" fill="url(#cg2)" /><polygon points="599.4,340.0 601.1,340.0 601.1,415.6 599.4,414.6" fill="#7a7f7e" /><polygon points="601.1,340.0 608.6,340.0 608.6,415.0 601.1,415.6" fill="url(#cg2)" /><polygon points="611.8,340.0 613.5,340.0 613.5,424.2 611.8,423.2" fill="#7a7f7e" /><polygon points="613.5,340.0 621.0,340.0 621.0,423.6 613.5,424.2" fill="url(#cg2)" /><polygon points="632.7,340.0 634.4,340.0 634.4,438.4 632.7,437.4" fill="#7a7f7e" /><polygon points="634.4,340.0 641.9,340.0 641.9,437.8 634.4,438.4" fill="url(#cg2)" /><polygon points="673.6,340.0 675.3,340.0 675.3,435.4 673.6,434.4" fill="#7a7f7e" /><polygon points="675.3,340.0 683.0,340.0 683.0,434.8 675.3,435.4" fill="url(#cg2)" /><polygon points="699.2,347.0 700.9,347.0 700.9,374.4 699.2,373.4" fill="#7a7f7e" /><polygon points="700.9,347.0 708.8,347.0 708.8,373.8 700.9,374.4" fill="url(#cg2)" /><polygon points="720.6,347.0 722.3,347.0 722.3,389.5 720.6,388.5" fill="#7a7f7e" /><polygon points="722.3,347.0 730.2,347.0 730.2,388.9 722.3,389.5" fill="url(#cg2)" /><polygon points="743.0,347.0 744.7,347.0 744.7,404.6 743.0,403.6" fill="#7a7f7e" /><polygon points="744.7,347.0 752.6,347.0 752.6,404.0 744.7,404.6" fill="url(#cg2)" /><polygon points="755.7,347.0 757.4,347.0 757.4,413.3 755.7,412.3" fill="#7a7f7e" /><polygon points="757.4,347.0 765.3,347.0 765.3,412.7 757.4,413.3" fill="url(#cg2)" /><polygon points="776.3,347.0 778.0,347.0 778.0,427.9 776.3,426.9" fill="#7a7f7e" /><polygon points="778.0,347.0 785.9,347.0 785.9,427.3 778.0,427.9" fill="url(#cg2)" /><polygon points="177.1,274.1 337.0,381.0 337.0,384.6 177.1,277.7" fill="#70787a" /><polygon points="337.0,381.0 491.7,369.8 491.7,373.4 337.0,384.6" fill="#b3b8b6" /><polygon points="491.7,369.8 500.5,375.3 500.5,378.9 491.7,373.4" fill="#70787a" /><polygon points="500.5,375.3 640.2,362.8 640.2,366.4 500.5,378.9" fill="#b3b8b6" /><polygon points="634.0,357.3 640.2,362.8 640.2,366.4 634.0,360.9" fill="#70787a" /><polygon points="634.0,357.3 787.1,346.5 787.1,350.1 634.0,360.9" fill="#b3b8b6" /><polygon points="177.1,274.1 339.0,265.0 500.0,255.0 670.0,264.5 787.1,346.5 634.0,357.3 640.2,362.8 500.5,375.3 491.7,369.8 337.0,381.0" fill="#54656a" /><polygon points="622.5,342.5 660.0,340.5 674.0,352.7 636.0,357.2" fill="#8399a0" /><polygon points="636.0,345.5 662.0,344.0 668.0,349.0 641.0,350.8" fill="#a3b8be" /><polygon points="459.0,318.0 546.0,318.0 566.0,333.4 459.0,340.5" fill="#a9bdc3" /><polygon points="491.3,318.0 495.3,318.0 495.3,335.0 491.3,335.6" fill="#94a3a7" /><polygon points="509.8,318.0 518.6,318.0 518.6,334.0 509.8,334.6" fill="#94a3a7" /><polygon points="532.3,318.0 541.1,318.0 541.1,332.5 532.3,333.1" fill="#94a3a7" /><polygon points="459.0,336.5 566.0,329.4 566.0,333.4 459.0,340.5" fill="#b9cacf" /><polygon points="546.0,318.0 566.0,333.4 556.0,334.0 538.0,320.0" fill="#9fb3b9" /><polygon points="485.4,190.0 487.1,190.0 487.1,222.6 485.4,221.6" fill="#7a7f7e" /><polygon points="487.1,190.0 495.5,190.0 495.5,222.0 487.1,222.6" fill="url(#cg2)" /><polygon points="509.0,205.0 510.7,205.0 510.7,221.6 509.0,220.6" fill="#7a7f7e" /><polygon points="510.7,205.0 518.0,205.0 518.0,221.0 510.7,221.6" fill="url(#cg2)" /><polygon points="654.0,212.0 655.7,212.0 655.7,228.6 654.0,227.6" fill="#7a7f7e" /><polygon points="655.7,212.0 664.0,212.0 664.0,228.0 655.7,228.6" fill="url(#cg2)" /><polygon points="675.4,210.0 677.1,210.0 677.1,227.6 675.4,226.6" fill="#7a7f7e" /><polygon points="677.1,210.0 685.4,210.0 685.4,227.0 677.1,227.6" fill="url(#cg2)" /><polygon points="700.0,262.0 701.7,262.0 701.7,293.6 700.0,292.6" fill="#7a7f7e" /><polygon points="701.7,262.0 709.4,262.0 709.4,293.0 701.7,293.6" fill="url(#cg2)" /><polygon points="720.6,262.0 722.3,262.0 722.3,307.1 720.6,306.1" fill="#7a7f7e" /><polygon points="722.3,262.0 730.0,262.0 730.0,306.5 722.3,307.1" fill="url(#cg2)" /><polygon points="743.0,262.0 744.7,262.0 744.7,322.0 743.0,321.0" fill="#7a7f7e" /><polygon points="744.7,262.0 752.4,262.0 752.4,321.4 744.7,322.0" fill="url(#cg2)" /><polygon points="755.7,262.0 757.4,262.0 757.4,330.8 755.7,329.8" fill="#7a7f7e" /><polygon points="757.4,262.0 765.1,262.0 765.1,330.2 757.4,330.8" fill="url(#cg2)" /><polygon points="180.0,208.0 181.7,208.0 181.7,274.0 180.0,273.0" fill="#7a7f7e" /><polygon points="181.7,208.0 189.2,208.0 189.2,273.4 181.7,274.0" fill="url(#cg2)" /><polygon points="191.4,215.7 193.1,215.7 193.1,281.7 191.4,280.7" fill="#7a7f7e" /><polygon points="193.1,215.7 200.6,215.7 200.6,281.1 193.1,281.7" fill="url(#cg2)" /><polygon points="212.7,230.2 214.4,230.2 214.4,295.9 212.7,294.9" fill="#7a7f7e" /><polygon points="214.4,230.2 221.9,230.2 221.9,295.3 214.4,295.9" fill="url(#cg2)" /><polygon points="235.3,245.5 237.0,245.5 237.0,311.0 235.3,310.0" fill="#7a7f7e" /><polygon points="237.0,245.5 244.5,245.5 244.5,310.4 237.0,311.0" fill="url(#cg2)" /><polygon points="258.4,261.2 260.1,261.2 260.1,326.4 258.4,325.4" fill="#7a7f7e" /><polygon points="260.1,261.2 267.6,261.2 267.6,325.8 260.1,326.4" fill="url(#cg2)" /><polygon points="280.5,276.2 282.2,276.2 282.2,341.2 280.5,340.2" fill="#7a7f7e" /><polygon points="282.2,276.2 289.7,276.2 289.7,340.6 282.2,341.2" fill="url(#cg2)" /><polygon points="303.3,291.7 305.0,291.7 305.0,356.4 303.3,355.4" fill="#7a7f7e" /><polygon points="305.0,291.7 312.5,291.7 312.5,355.8 305.0,356.4" fill="url(#cg2)" /><polygon points="316.0,300.3 317.7,300.3 317.7,364.9 316.0,363.9" fill="#7a7f7e" /><polygon points="317.7,300.3 325.2,300.3 325.2,364.3 317.7,364.9" fill="url(#cg2)" /><polygon points="337.0,314.6 338.7,314.6 338.7,378.9 337.0,377.9" fill="#7a7f7e" /><polygon points="338.7,314.6 346.2,314.6 346.2,378.3 338.7,378.9" fill="url(#cg2)" /><polygon points="427.7,296.0 429.4,296.0 429.4,330.3 427.7,329.3" fill="#7a7f7e" /><polygon points="429.4,296.0 437.3,296.0 437.3,329.7 429.4,330.3" fill="url(#cg2)" /><polygon points="450.3,296.0 452.0,296.0 452.0,344.6 450.3,343.6" fill="#7a7f7e" /><polygon points="452.0,296.0 459.9,296.0 459.9,344.0 452.0,344.6" fill="url(#cg2)" /><polygon points="462.8,296.0 464.5,296.0 464.5,353.3 462.8,352.3" fill="#7a7f7e" /><polygon points="464.5,296.0 472.4,296.0 472.4,352.7 464.5,353.3" fill="url(#cg2)" /><polygon points="480.4,296.0 482.1,296.0 482.1,368.4 480.4,367.4" fill="#7a7f7e" /><polygon points="482.1,296.0 490.0,296.0 490.0,367.8 482.1,368.4" fill="url(#cg2)" /><polygon points="599.0,280.0 600.7,280.0 600.7,333.3 599.0,332.3" fill="#7a7f7e" /><polygon points="600.7,280.0 608.0,280.0 608.0,332.7 600.7,333.3" fill="url(#cg2)" /><polygon points="611.2,284.0 612.9,284.0 612.9,342.1 611.2,341.1" fill="#7a7f7e" /><polygon points="612.9,284.0 620.2,284.0 620.2,341.5 612.9,342.1" fill="url(#cg2)" /><polygon points="633.8,291.0 635.5,291.0 635.5,357.1 633.8,356.1" fill="#7a7f7e" /><polygon points="635.5,291.0 642.8,291.0 642.8,356.5 635.5,357.1" fill="url(#cg2)" /><polygon points="674.0,286.0 675.7,286.0 675.7,353.3 674.0,352.3" fill="#7a7f7e" /><polygon points="675.7,286.0 683.0,286.0 683.0,352.7 675.7,353.3" fill="url(#cg2)" /><polygon points="405.0,311.8 415.0,311.2 415.0,314.8 405.0,315.2" fill="#aebfc5" /><polygon points="378.0,313.8 398.0,312.6 398.0,315.0 378.0,316.0" fill="#9fb3ba" /><polygon points="177.1,206.0 337.0,314.6 337.0,318.2 177.1,209.6" fill="#70787a" /><polygon points="337.0,314.6 491.7,302.7 491.7,306.3 337.0,318.2" fill="#b3b8b6" /><polygon points="483.0,189.6 526.0,219.0 526.0,222.6 483.0,193.2" fill="#70787a" /><polygon points="639.0,214.7 687.4,210.2 687.4,213.8 639.0,218.3" fill="#b3b8b6" /><polygon points="639.0,214.7 662.8,227.2 662.8,230.8 639.0,218.3" fill="#70787a" /><polygon points="665.3,272.9 766.5,264.9 766.5,268.5 665.3,276.5" fill="#b3b8b6" /><polygon points="665.3,272.9 682.9,286.7 682.9,290.3 665.3,276.5" fill="#70787a" /><polygon points="631.5,291.7 682.9,286.7 682.9,290.3 631.5,295.3" fill="#b3b8b6" /><polygon points="615.1,279.7 631.5,291.7 631.5,295.3 615.1,283.3" fill="#70787a" /><polygon points="473.9,290.6 615.1,279.7 615.1,283.3 473.9,294.2" fill="#b3b8b6" /><polygon points="177.1,206.0 338.7,197.0 386.5,230.0 526.0,219.0 483.0,189.6 643.3,180.0 687.4,210.2 639.0,214.7 662.8,227.2 709.3,224.5 766.5,264.9 665.3,272.9 682.9,286.7 631.5,291.7 615.1,279.7 473.9,290.6 491.7,302.7 337.0,314.6" fill="#54656a" /><polygon points="353.6,242.7 394.6,241.1 440.0,270.6 440.0,279.8 407.5,280.9" fill="#a7bbc1" /><polygon points="353.6,242.7 394.6,241.1 396.5,242.6 356.5,244.3" fill="#7f9096" /><polygon points="353.6,242.7 368.6,242.2 368.6,252.6" fill="#8fa2a8" /><polygon points="383.7,243.2 392.5,242.9 392.5,270.5 383.7,264.8" fill="#98a4a7" /><polygon points="406.8,251.0 414.8,256.2 414.8,280.7 407.5,280.9 406.8,280.4" fill="#98a4a7" /><polygon points="368.6,244.0 369.4,244.0 369.4,256.0 368.6,255.5" fill="#8a9aa0" /></g></svg>
<svg style="left:0;top:0" width="260" height="537" viewBox="0 0 260 537"><path d="M181.4 516.4 V497" stroke="#1a2ad8" stroke-width="0.9"/><path d="M179.6 499.8 L181.4 494.6 L183.2 499.8Z" fill="#1a2ad8"/><path d="M181.4 516.4 L199.6 515.2" stroke="#d8202e" stroke-width="0.9"/><path d="M197.6 513.2 L203.4 515 L197.8 517Z" fill="#d8202e"/><path d="M181.4 516.4 L176.4 513.2" stroke="#2fa84f" stroke-width="0.9"/><circle cx="176" cy="513" r="1.5" fill="#2fa84f"/></svg><div class="t" style="left:179.3px;top:485.4px;color:#1a2ad8;font-weight:bold;font-size:6.6px;">Z</div><div class="t" style="left:206px;top:511.2px;color:#d8202e;font-weight:bold;font-size:6.6px;">X</div><div class="t" style="left:170.6px;top:506px;color:#2fa84f;font-weight:bold;font-size:6.6px;">Y</div>
<svg style="left:812px;top:76px" width="212" height="12" viewBox="0 0 212 12"><rect x="0.80" y="0.80" width="211.20" height="10.70" fill="#d9d9d9"/></svg><div class="hdr" style="left:812.8px;top:76.8px;width:211.20000000000005px;background:none;"><div class="t" style="left:2px;">Lotes de hormigón</div><svg style="left:0;top:0" width="211.20000000000005" height="10.7" viewBox="0 0 211.20000000000005 10.7"><path d="M192.30000000000007 4 L195.00000000000006 6.8 L197.70000000000005 4" stroke="#111" stroke-width="1.1" fill="none"/><path d="M203.20000000000005 3 L208.20000000000005 8 M208.20000000000005 3 L203.20000000000005 8" stroke="#111" stroke-width="1" fill="none"/></svg></div>
<svg style="left:812px;top:87px" width="212" height="222" viewBox="0 0 212 222"><rect x="0.80" y="0.50" width="211.20" height="221.50" fill="#fff"/></svg>
<div class="t" style="left:815.8px;top:89px;">Lotes</div>
<svg style="left:824px;top:97px" width="97" height="11" viewBox="0 0 97 11"><rect x="0.30" y="0.50" width="96.00" height="10.00" fill="#f3f3f3"/></svg>
<div class="a" style="left:820.3px;top:97px;width:0.6px;height:34px;background:#c4c4c4;"></div>
<div class="a" style="left:820.3px;top:102.3px;width:4.5px;height:0.6px;background:#c4c4c4;"></div>
<div class="t" style="left:826.0px;top:99px;letter-spacing:-0.04px;">Lote - Grupo - Cimentaciones - 1</div>
<div class="a" style="left:820.3px;top:111.8px;width:4.5px;height:0.6px;background:#c4c4c4;"></div>
<div class="t" style="left:826.0px;top:108px;letter-spacing:-0.04px;">Lote - Grupo - Pilares - 1</div>
<div class="a" style="left:820.3px;top:121.4px;width:4.5px;height:0.6px;background:#c4c4c4;"></div>
<div class="t" style="left:826.0px;top:118px;letter-spacing:-0.04px;">Lote - Grupo - Forjados - 1</div>
<div class="a" style="left:820.3px;top:130.9px;width:4.5px;height:0.6px;background:#c4c4c4;"></div>
<div class="t" style="left:826.0px;top:127px;letter-spacing:-0.04px;">Lote - Grupo - Forjados - 2</div>
<svg style="left:915.00px;top:310.10px" width="7" height="1" viewBox="0 0 7 1"><rect x="0.0" y="0" width="0.8" height="0.8" fill="#aaa"/><rect x="1.6" y="0" width="0.8" height="0.8" fill="#aaa"/><rect x="3.2" y="0" width="0.8" height="0.8" fill="#aaa"/><rect x="4.800000000000001" y="0" width="0.8" height="0.8" fill="#aaa"/></svg>
<svg style="left:812px;top:313px" width="212" height="11" viewBox="0 0 212 11"><rect x="0.80" y="0.00" width="211.20" height="10.70" fill="#d9d9d9"/></svg><div class="hdr" style="left:812.8px;top:313px;width:211.20000000000005px;background:none;"><div class="t" style="left:2px;">Elementos propios</div><svg style="left:0;top:0" width="211.20000000000005" height="10.7" viewBox="0 0 211.20000000000005 10.7"><path d="M192.30000000000007 4 L195.00000000000006 6.8 L197.70000000000005 4" stroke="#111" stroke-width="1.1" fill="none"/><path d="M203.20000000000005 3 L208.20000000000005 8 M208.20000000000005 3 L203.20000000000005 8" stroke="#111" stroke-width="1" fill="none"/></svg></div>
<svg style="left:812px;top:323px" width="212" height="217" viewBox="0 0 212 217"><rect x="0.80" y="0.70" width="211.20" height="216.00" fill="#fff"/></svg>
<svg style="left:817.30px;top:326.50px" width="6" height="6" viewBox="0 0 6 6"><path d="M0.3 1.6 L3 4.4 L5.7 1.6" stroke="#2a2a2a" stroke-width="1.2" fill="none"/></svg>
<div class="t" style="left:826.7px;top:326px;">Proyecto</div>
<svg style="left:988.00px;top:326.50px" width="9" height="6" viewBox="0 0 9 6"><path d="M0.2 3 Q4.5 -0.9 8.8 3 Q4.5 6.9 0.2 3Z" fill="#e9eff8" stroke="#d3deef" stroke-width="0.4"/><ellipse cx="4.5" cy="3" rx="2.35" ry="2.3" fill="#5277b0"/><circle cx="4.1" cy="2.9" r="1.0" fill="#a5b9d9"/></svg>
<svg style="left:1003.90px;top:325.30px" width="7.4" height="8.6" viewBox="0 0 7.4 8.6"><path d="M2 1.2 Q3.8 -0.2 5.4 1 Q6 1.8 5.9 4" stroke="#7f9fcd" stroke-width="0.9" fill="none"/><rect x="0.1" y="3.9" width="7" height="4.3" rx="0.7" fill="#5f82b5"/><rect x="3" y="5.3" width="1.2" height="1.5" fill="#cfdaec"/></svg>
<svg style="left:827.50px;top:337.17px" width="6" height="6" viewBox="0 0 6 6"><path d="M1.7 0.3 L4.5 3 L1.7 5.7" stroke="#444" stroke-width="1.1" fill="none"/></svg>
<div class="t" style="left:836.6px;top:337px;">Proceso constructivo</div>
<svg style="left:988.00px;top:336.67px" width="9" height="7" viewBox="0 0 9 7"><path d="M0.2 3.5 Q4.5 -0.4 8.8 3.5 Q4.5 7.4 0.2 3.5Z" fill="#f0f1f3" stroke="#e2e4e8" stroke-width="0.4"/><ellipse cx="4.5" cy="3.5" rx="2.2" ry="2.1" fill="#c2c5ca"/><path d="M1.2 0.4 L8 6.8" stroke="#7f9cc8" stroke-width="0.7"/><path d="M1.2 0.4 L4 3" stroke="#8a8a8a" stroke-width="0.7"/></svg>
<svg style="left:1003.90px;top:335.97px" width="7.4" height="8.6" viewBox="0 0 7.4 8.6"><path d="M2 1.2 Q3.8 -0.2 5.4 1 Q6 1.8 5.9 4" stroke="#7f9fcd" stroke-width="0.9" fill="none"/><rect x="0.1" y="3.9" width="7" height="4.3" rx="0.7" fill="#5f82b5"/><rect x="3" y="5.3" width="1.2" height="1.5" fill="#cfdaec"/></svg>
<svg style="left:827.50px;top:347.84px" width="6" height="6" viewBox="0 0 6 6"><path d="M0.3 1.6 L3 4.4 L5.7 1.6" stroke="#2a2a2a" stroke-width="1.2" fill="none"/></svg>
<div class="t" style="left:836.6px;top:348px;">Control de calidad</div>
<svg style="left:988.00px;top:347.84px" width="9" height="6" viewBox="0 0 9 6"><path d="M0.2 3 Q4.5 -0.9 8.8 3 Q4.5 6.9 0.2 3Z" fill="#e9eff8" stroke="#d3deef" stroke-width="0.4"/><ellipse cx="4.5" cy="3" rx="2.35" ry="2.3" fill="#5277b0"/><circle cx="4.1" cy="2.9" r="1.0" fill="#a5b9d9"/></svg>
<svg style="left:1003.90px;top:346.64px" width="7.4" height="8.6" viewBox="0 0 7.4 8.6"><path d="M2 1.2 Q3.8 -0.2 5.4 1 Q6 1.8 5.9 4" stroke="#7f9fcd" stroke-width="0.9" fill="none"/><rect x="0.1" y="3.9" width="7" height="4.3" rx="0.7" fill="#5f82b5"/><rect x="3" y="5.3" width="1.2" height="1.5" fill="#cfdaec"/></svg>
<div class="t" style="left:846.8px;top:358px;">Superficies construidas</div>
<svg style="left:988.00px;top:358.51px" width="9" height="6" viewBox="0 0 9 6"><path d="M0.2 3 Q4.5 -0.9 8.8 3 Q4.5 6.9 0.2 3Z" fill="#e9eff8" stroke="#d3deef" stroke-width="0.4"/><ellipse cx="4.5" cy="3" rx="2.35" ry="2.3" fill="#5277b0"/><circle cx="4.1" cy="2.9" r="1.0" fill="#a5b9d9"/></svg>
<svg style="left:1003.90px;top:357.31px" width="7.4" height="8.6" viewBox="0 0 7.4 8.6"><path d="M2 1.2 Q3.8 -0.2 5.4 1 Q6 1.8 5.9 4" stroke="#7f9fcd" stroke-width="0.9" fill="none"/><rect x="0.1" y="3.9" width="7" height="4.3" rx="0.7" fill="#5f82b5"/><rect x="3" y="5.3" width="1.2" height="1.5" fill="#cfdaec"/></svg>
<div class="t" style="left:846.8px;top:369px;">Longitudes construidas</div>
<svg style="left:988.00px;top:369.18px" width="9" height="6" viewBox="0 0 9 6"><path d="M0.2 3 Q4.5 -0.9 8.8 3 Q4.5 6.9 0.2 3Z" fill="#e9eff8" stroke="#d3deef" stroke-width="0.4"/><ellipse cx="4.5" cy="3" rx="2.35" ry="2.3" fill="#5277b0"/><circle cx="4.1" cy="2.9" r="1.0" fill="#a5b9d9"/></svg>
<svg style="left:1003.90px;top:367.98px" width="7.4" height="8.6" viewBox="0 0 7.4 8.6"><path d="M2 1.2 Q3.8 -0.2 5.4 1 Q6 1.8 5.9 4" stroke="#7f9fcd" stroke-width="0.9" fill="none"/><rect x="0.1" y="3.9" width="7" height="4.3" rx="0.7" fill="#5f82b5"/><rect x="3" y="5.3" width="1.2" height="1.5" fill="#cfdaec"/></svg>
<svg style="left:155.30px;top:305.00px" width="1" height="7" viewBox="0 0 1 7"><rect x="0" y="0.0" width="0.8" height="0.8" fill="#aaa"/><rect x="0" y="1.6" width="0.8" height="0.8" fill="#aaa"/><rect x="0" y="3.2" width="0.8" height="0.8" fill="#aaa"/><rect x="0" y="4.800000000000001" width="0.8" height="0.8" fill="#aaa"/></svg>
<svg style="left:810.80px;top:305.50px" width="1" height="7" viewBox="0 0 1 7"><rect x="0" y="0.0" width="0.8" height="0.8" fill="#aaa"/><rect x="0" y="1.6" width="0.8" height="0.8" fill="#aaa"/><rect x="0" y="3.2" width="0.8" height="0.8" fill="#aaa"/><rect x="0" y="4.800000000000001" width="0.8" height="0.8" fill="#aaa"/></svg>
<svg style="left:0px;top:539px" width="1024" height="11" viewBox="0 0 1024 11"><rect x="0.00" y="0.70" width="1024.00" height="10.30" fill="#f0f0f0"/></svg>
<svg style="left:4.30px;top:541.10px" width="8" height="8" viewBox="0 0 8 8"><circle cx="4" cy="4" r="3.9" fill="#1d74d0"/><rect x="3.4" y="3.3" width="1.3" height="3" fill="#fff"/><circle cx="4.05" cy="2.1" r="0.75" fill="#fff"/></svg>
<div class="t" style="left:17.0px;top:541px;color:#222;letter-spacing:-0.04px;">Seleccione una opción del menú.</div>
<svg style="left:0;top:0" width="1024" height="550" viewBox="0 0 1024 550"><rect x="427" y="234.6" width="175.2" height="86" fill="#2377d3"/><rect x="427" y="234.6" width="175.2" height="16.4" fill="#2d7dd2"/><rect x="429.3" y="251" width="171.1" height="41.2" fill="#f0f0f0"/><rect x="429.3" y="292.2" width="171.1" height="25.8" fill="#e9e9e9"/><rect x="429.3" y="292" width="171.1" height="0.6" fill="#dedede"/><rect x="495" y="299.2" width="39" height="13" rx="1.5" fill="#fdfdfd" stroke="#5a9bd8" stroke-width="0.8"/><path d="M583.7 241.3 L589 246.6 M589 241.3 L583.7 246.6" stroke="#fff" stroke-width="1.1" fill="none"/></svg>
<div class="t c" style="left:441.5px;width:120px;top:240px;color:#fff;">Información</div>
<svg style="left:441.00px;top:262.60px" width="18" height="18" viewBox="0 0 18 18"><defs><radialGradient id="ig" cx="0.4" cy="0.3" r="0.8"><stop offset="0" stop-color="#6f9cf0"/><stop offset="0.6" stop-color="#1f4fc0"/><stop offset="1" stop-color="#0f2f90"/></radialGradient></defs><circle cx="9" cy="9" r="8.6" fill="#c9ccd2"/><circle cx="9" cy="9" r="7.4" fill="url(#ig)"/><path d="M3 7 Q9 2 15 7 Q9 5.4 3 7Z" fill="#a8c4f6" opacity="0.55"/><rect x="8" y="7.4" width="2.2" height="6.2" fill="#fff"/><rect x="7.2" y="7.4" width="2" height="1" fill="#fff"/><circle cx="9.1" cy="4.9" r="1.35" fill="#fff"/></svg>
<div class="t" style="left:474.0px;top:268px;color:#111;letter-spacing:-0.05px;">La obra se ha calculado correctamente.</div>
<div class="t c" style="left:454.5px;width:120px;top:302px;color:#111;">Aceptar</div>
</div></body></html>
